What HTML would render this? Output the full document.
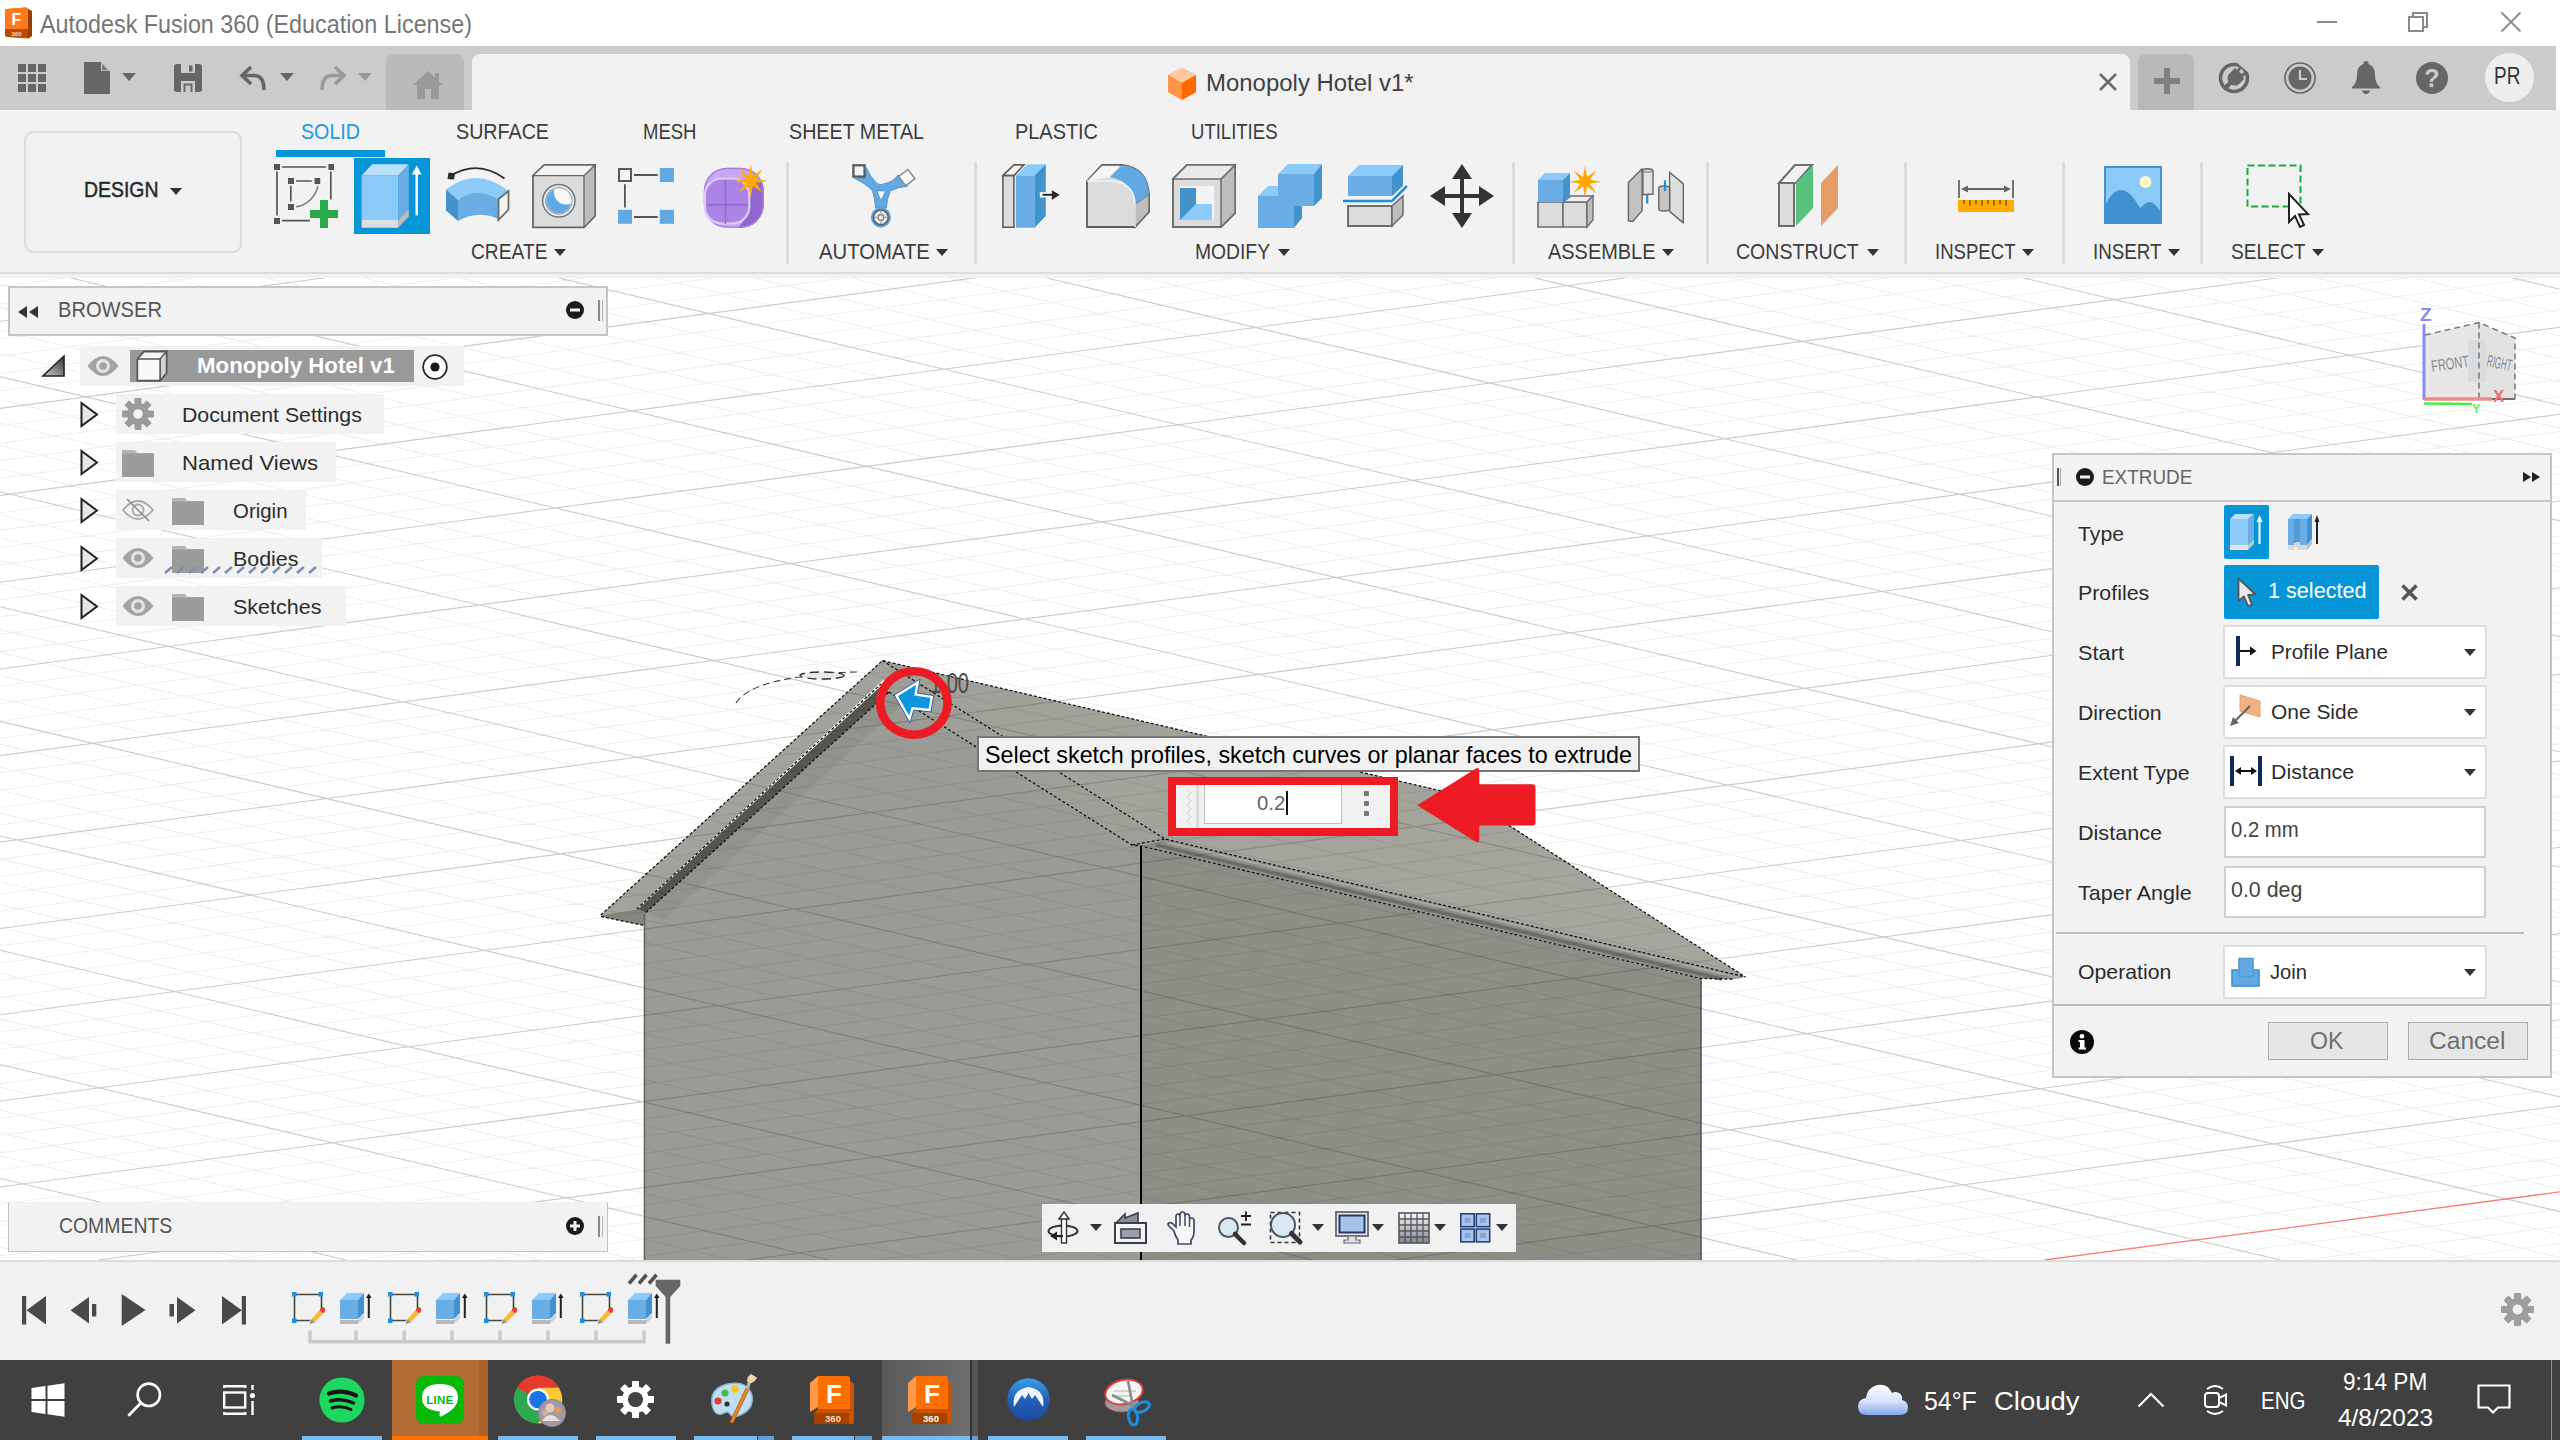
<!DOCTYPE html>
<html lang="en">
<head>
<meta charset="utf-8">
<title>Autodesk Fusion 360 (Education License)</title>
<style>
*{box-sizing:border-box;margin:0;padding:0}
html,body{width:2560px;height:1440px;overflow:hidden;background:#fff;font-family:"Liberation Sans",sans-serif;color:#333}
.abs{position:absolute}
.t{position:absolute;white-space:nowrap;line-height:1}
svg{position:absolute;overflow:visible}
#titlebar{left:0;top:0;width:2560px;height:46px;background:#fff}
#tabbar{left:0;top:46px;width:2556px;height:64px;background:#cbcbcb}
#ribbon{left:0;top:110px;width:2560px;height:168px;background:#f2f2f2}
#canvas{left:0;top:273px;width:2560px;height:987px;background:#fff;overflow:hidden}
#timeline{left:0;top:1260px;width:2560px;height:100px;background:#f1f1f1;border-top:2px solid #dcdcdc}
#taskbar{left:0;top:1360px;width:2560px;height:80px;background:#404040}
.rtab{font-size:21.5px;color:#3c3c3c;top:122px}
.rlab{font-size:21.5px;color:#3c3c3c;top:242px}
.sep{position:absolute;top:162px;width:3px;height:102px;background:#dcdcdc}
.dd{position:absolute;width:0;height:0;border-left:6px solid transparent;border-right:6px solid transparent;border-top:7px solid #333}
.brow{position:absolute;height:40px;background:#f2f2f2}
.btxt{font-size:20.5px;color:#2c2c2c;letter-spacing:0.2px}
.plab{font-size:20.5px;color:#2c2c2c}
.pdd{position:absolute;left:2223px;width:264px;height:54px;background:#fff;border:2px solid #dedede;border-radius:3px}
.pin{position:absolute;left:2224px;width:262px;height:52px;background:#fff;border:2px solid #cfcfcf}
.tbt{color:#fff;font-family:"Liberation Sans",sans-serif}
</style>
</head>
<body>
<!-- ================= TITLE BAR ================= -->
<div id="titlebar" class="abs">
  <svg style="left:4px;top:7px" width="30" height="32" viewBox="0 0 30 32">
    <path d="M3 2 L22 0.5 L28 4 L28 29 L24 31.5 L3 30 Q1 30 1 28 L1 4 Q1 2 3 2Z" fill="#b84a0c"/>
    <path d="M3 2 L22 0.5 Q24 0.5 24 3 L24 22 L1 22 L1 4 Q1 2 3 2Z" fill="#ff7a1a"/>
    <path d="M24 3 L28 4 L28 29 L24 31.5Z" fill="#9a3c08"/>
    <text x="12.5" y="17.5" font-size="16" font-weight="bold" fill="#fff" text-anchor="middle" font-family="Liberation Sans,sans-serif">F</text>
    <text x="12.5" y="29" font-size="6" font-weight="bold" fill="#ffd9b8" text-anchor="middle" font-family="Liberation Sans,sans-serif">360</text>
  </svg>
  <div class="t" style="left:40px;top:11.84px;font-size:25px;color:#767676;transform:scaleX(0.9335);transform-origin:0 0;">Autodesk Fusion 360 (Education License)</div>
  <!-- window controls -->
  <div class="abs" style="left:2317px;top:21px;width:20px;height:2px;background:#8a8a8a"></div>
  <div class="abs" style="left:2412px;top:12px;width:16px;height:16px;border:2px solid #8a8a8a"></div>
  <div class="abs" style="left:2408px;top:16px;width:16px;height:16px;border:2px solid #8a8a8a;background:#fff"></div>
  <svg style="left:2501px;top:12px" width="20" height="20" viewBox="0 0 20 20"><path d="M0.5 0.5 L19.5 19.5 M19.5 0.5 L0.5 19.5" stroke="#8c8c8c" stroke-width="1.8" fill="none"/></svg>
</div>

<!-- ================= TAB / QAT BAR ================= -->
<div id="tabbar" class="abs">
  <!-- home tab -->
  <div class="abs" style="left:386px;top:8px;width:78px;height:56px;background:#bababa;border-radius:7px 7px 0 0"></div>
  <!-- document tab -->
  <div class="abs" style="left:472px;top:8px;width:1658px;height:56px;background:#f1f1f1;border-radius:8px 8px 0 0"></div>
  <!-- plus tab -->
  <div class="abs" style="left:2138px;top:8px;width:56px;height:56px;background:#b9b9b9;border-radius:7px 7px 0 0"></div>
</div>

<!-- QAT icons -->
<svg style="left:18px;top:64px" width="28" height="28" viewBox="0 0 28 28" fill="#666">
 <rect x="0" y="0" width="8" height="8"/><rect x="10" y="0" width="8" height="8"/><rect x="20" y="0" width="8" height="8"/>
 <rect x="0" y="10" width="8" height="8"/><rect x="10" y="10" width="8" height="8"/><rect x="20" y="10" width="8" height="8"/>
 <rect x="0" y="20" width="8" height="8"/><rect x="10" y="20" width="8" height="8"/><rect x="20" y="20" width="8" height="8"/>
</svg>
<svg style="left:84px;top:62px" width="26" height="32" viewBox="0 0 26 32"><path d="M1 0 H17 L26 9 V31 Q26 32 25 32 H1 Q0 32 0 31 V1 Q0 0 1 0Z" fill="#666"/><path d="M17 0 L26 9 H17Z" fill="#cbcbcb"/><path d="M18 2 L24 8.2 H18Z" fill="#777"/></svg>
<div class="dd" style="left:122px;top:73px;border-left-width:7px;border-right-width:7px;border-top:8px solid #666"></div>
<svg style="left:174px;top:64px" width="28" height="28" viewBox="0 0 28 28"><path d="M3 0 H25 Q28 0 28 3 V25 Q28 28 25 28 H3 Q0 28 0 25 V3 Q0 0 3 0Z" fill="#666"/><rect x="7" y="0" width="14" height="9" fill="#cbcbcb"/><rect x="15" y="1.5" width="3.5" height="6" fill="#666"/><rect x="7" y="17" width="14" height="11" fill="#cbcbcb"/><rect x="9.5" y="19.5" width="9" height="8.5" fill="#666"/><rect x="11.5" y="21.5" width="5" height="6.5" fill="#cbcbcb"/></svg>
<svg style="left:240px;top:66px" width="26" height="24" viewBox="0 0 26 24"><path d="M11 1 L2 9.5 L11 18" fill="none" stroke="#666" stroke-width="3.6"/><path d="M3 9.5 H14 Q24 9.5 24 24" fill="none" stroke="#666" stroke-width="3.6"/></svg>
<div class="dd" style="left:280px;top:73px;border-left-width:7px;border-right-width:7px;border-top:8px solid #666"></div>
<svg style="left:320px;top:66px" width="26" height="24" viewBox="0 0 26 24"><path d="M15 1 L24 9.5 L15 18" fill="none" stroke="#999" stroke-width="3.6"/><path d="M23 9.5 H12 Q2 9.5 2 24" fill="none" stroke="#999" stroke-width="3.6"/></svg>
<div class="dd" style="left:358px;top:73px;border-left-width:7px;border-right-width:7px;border-top:8px solid #999"></div>
<svg style="left:413px;top:71px" width="30" height="28" viewBox="0 0 30 28"><path d="M15 0 L30 14 H26 V28 H18 V18 H12 V28 H4 V14 H0Z" fill="#999"/><rect x="22" y="2" width="4" height="8" fill="#999"/></svg>
<!-- doc tab title -->
<svg style="left:1167px;top:68px" width="30" height="32" viewBox="0 0 30 32"><path d="M15 0 L29 7 L29 24 L15 32 L1 24 L1 7Z" fill="#ff8c3a"/><path d="M15 0 L29 7 L15 15 L1 7Z" fill="#ffc9a0"/><path d="M15 15 L29 7 L29 24 L15 32Z" fill="#ff6a00"/><path d="M15 15 L1 7 L1 24 L15 32Z" fill="#ff9447"/></svg>
<div class="t" style="left:1206px;top:70.86px;font-size:24.5px;color:#404040;transform:scaleX(0.9776);transform-origin:0 0;">Monopoly Hotel v1*</div>
<svg style="left:2099px;top:73px" width="18" height="18" viewBox="0 0 18 18"><path d="M1 1 L17 17 M17 1 L1 17" stroke="#6a6a6a" stroke-width="2.6" fill="none"/></svg>
<div class="abs" style="left:2154px;top:78px;width:26px;height:6px;background:#808080"></div>
<div class="abs" style="left:2164px;top:68px;width:6px;height:26px;background:#808080"></div>
<!-- right icons -->
<svg style="left:2218px;top:62px" width="32" height="32" viewBox="0 0 32 32"><circle cx="16" cy="16" r="13.5" fill="none" stroke="#666" stroke-width="3.6"/><path d="M11 12 L17 6 L19 8 L21 5 L23 7 L21 10 L24 12 L26 10 L28 12 L25 15 L26 17 L20 23 Q15 25 11 21 Q8 16 11 12Z" fill="#666"/><path d="M4 25 L12 19 L14 22 L8 29Z" fill="#666"/><path d="M18 0 L32 0 L32 12Z" fill="#cbcbcb"/></svg>
<svg style="left:2284px;top:62px" width="32" height="32" viewBox="0 0 32 32"><circle cx="16" cy="16" r="15" fill="none" stroke="#666" stroke-width="1.6"/><circle cx="16" cy="16" r="11.5" fill="#666"/><path d="M16 8 V17 H23" stroke="#cbcbcb" stroke-width="2.2" fill="none"/></svg>
<svg style="left:2352px;top:61px" width="28" height="34" viewBox="0 0 28 34"><path d="M14 0 Q16.5 0 16.5 3 Q23 5 23 14 Q23 22 28 26 V27.5 H0 V26 Q5 22 5 14 Q5 5 11.5 3 Q11.5 0 14 0Z" fill="#666"/><path d="M10 29.5 H18 Q17 33 14 33 Q11 33 10 29.5Z" fill="#666"/></svg>
<svg style="left:2416px;top:62px" width="32" height="32" viewBox="0 0 32 32"><circle cx="16" cy="16" r="16" fill="#666"/><text x="16" y="24.5" font-size="25" font-weight="bold" fill="#cbcbcb" text-anchor="middle" font-family="Liberation Sans,sans-serif">?</text></svg>
<div class="abs" style="left:2485px;top:53px;width:49px;height:49px;border-radius:50%;background:#eeeeee"></div>
<div class="t" style="left:2494px;top:65.14px;font-size:23.7px;color:#333333;transform:scaleX(0.8023);transform-origin:0 0;">PR</div>


<!-- ================= RIBBON ================= -->
<div id="ribbon" class="abs"></div>
<!-- workspace button -->
<div class="abs" style="left:24px;top:131px;width:218px;height:122px;border:2.500px solid #dcdcdc;border-radius:9px;background:#f1f1f1"></div>
<div class="t" style="left:84px;top:178.95px;font-size:22.5px;color:#2a2a2a;transform:scaleX(0.8636);transform-origin:0 0;-webkit-text-stroke:0.5px #2a2a2a">DESIGN</div>
<div class="dd" style="left:170px;top:188px"></div>
<!-- tabs -->
<div class="t" style="left:301px;top:121.80px;font-size:21.5px;color:#1a9be0;transform:scaleX(0.9143);transform-origin:0 0;">SOLID</div>
<div class="abs" style="left:276px;top:150px;width:109px;height:7px;background:#0696d7"></div>
<div class="t" style="left:456px;top:121.80px;font-size:21.5px;color:#3c3c3c;transform:scaleX(0.9157);transform-origin:0 0;">SURFACE</div>
<div class="t" style="left:642.5px;top:121.80px;font-size:21.5px;color:#3c3c3c;transform:scaleX(0.8612);transform-origin:0 0;">MESH</div>
<div class="t" style="left:788.7px;top:121.80px;font-size:21.5px;color:#3c3c3c;transform:scaleX(0.9161);transform-origin:0 0;">SHEET METAL</div>
<div class="t" style="left:1014.5px;top:121.80px;font-size:21.5px;color:#3c3c3c;transform:scaleX(0.9261);transform-origin:0 0;">PLASTIC</div>
<div class="t" style="left:1191px;top:121.80px;font-size:21.5px;color:#3c3c3c;transform:scaleX(0.8619);transform-origin:0 0;">UTILITIES</div>
<!-- group labels -->
<div class="t" style="left:471px;top:240.88px;font-size:22px;color:#3c3c3c;transform:scaleX(0.8732);transform-origin:0 0;">CREATE</div><div class="dd" style="left:554px;top:249px"></div>
<div class="t" style="left:818.7px;top:240.88px;font-size:22px;color:#3c3c3c;transform:scaleX(0.9218);transform-origin:0 0;">AUTOMATE</div><div class="dd" style="left:936px;top:249px"></div>
<div class="t" style="left:1195px;top:240.88px;font-size:22px;color:#3c3c3c;transform:scaleX(0.8766);transform-origin:0 0;">MODIFY</div><div class="dd" style="left:1278px;top:249px"></div>
<div class="t" style="left:1547.5px;top:240.88px;font-size:22px;color:#3c3c3c;transform:scaleX(0.9063);transform-origin:0 0;">ASSEMBLE</div><div class="dd" style="left:1662px;top:249px"></div>
<div class="t" style="left:1736px;top:240.88px;font-size:22px;color:#3c3c3c;transform:scaleX(0.8884);transform-origin:0 0;">CONSTRUCT</div><div class="dd" style="left:1867px;top:249px"></div>
<div class="t" style="left:1934.5px;top:240.88px;font-size:22px;color:#3c3c3c;transform:scaleX(0.8442);transform-origin:0 0;">INSPECT</div><div class="dd" style="left:2022px;top:249px"></div>
<div class="t" style="left:2092.5px;top:240.88px;font-size:22px;color:#3c3c3c;transform:scaleX(0.8533);transform-origin:0 0;">INSERT</div><div class="dd" style="left:2168px;top:249px"></div>
<div class="t" style="left:2230.5px;top:240.88px;font-size:22px;color:#3c3c3c;transform:scaleX(0.8704);transform-origin:0 0;">SELECT</div><div class="dd" style="left:2312px;top:249px"></div>
<!-- separators -->
<div class="sep" style="left:786px"></div>
<div class="sep" style="left:974px"></div>
<div class="sep" style="left:1512px"></div>
<div class="sep" style="left:1706px"></div>
<div class="sep" style="left:1904px"></div>
<div class="sep" style="left:2062px"></div>
<div class="sep" style="left:2200px"></div>

<!-- 1 create sketch -->
<svg style="left:274px;top:164px" width="64" height="64" viewBox="0 0 64 64">
 <g stroke="#555" stroke-width="1.700" fill="none">
  <path d="M8 3 H52 M3 7.600 V51.400 M56.800 7.600 V35.500 M8 56.700 H35.800"/>
  <path d="M22 17 H37.800 M16.800 21.800 V37.500"/>
 </g>
 <path d="M43.800 22.200 A26 26 0 0 1 22 42.800" stroke="#777" stroke-width="1.500" fill="none"/>
 <g fill="#555">
  <rect x="0" y="0" width="6" height="6"/><rect x="54.400" y="0" width="5.600" height="6"/><rect x="0" y="54" width="6" height="6"/>
  <rect x="14" y="14" width="6" height="6"/><rect x="40.500" y="14" width="5.700" height="6"/><rect x="14" y="40" width="6" height="6"/>
 </g>
 <path d="M46 36 H54 V46 H64 V54 H54 V64 H46 V54 H36 V46 H46Z" fill="#2aa84a"/>
</svg>
<!-- 2 extrude (active) -->
<div class="abs" style="left:354px;top:158px;width:76px;height:76px;background:#0696d7"></div>
<svg style="left:354px;top:158px" width="76" height="76" viewBox="0 0 76 76">
 <path d="M7.600 17.600 L18.200 6.300 H54.800 L44.200 17.600Z" fill="#b9e0fd"/>
 <path d="M7.600 17.600 H44.200 V62 H7.600Z" fill="#8ccafa"/>
 <path d="M44.200 17.600 L54.800 6.300 V50.700 L44.200 62Z" fill="#6aade4"/>
 <path d="M7.600 62 H44.200 V69.800 H7.600Z" fill="#dedede"/>
 <path d="M44.200 62 L54.800 50.700 V58.500 L44.200 69.800Z" fill="#bcbcbc"/>
 <path d="M62.700 57.400 V15" stroke="#fff" stroke-width="2.400" fill="none"/>
 <path d="M57.800 16.500 L62.700 7.500 L67.600 16.500Z" fill="#fff"/>
</svg>
<!-- 3 revolve -->
<svg style="left:446px;top:164px" width="66" height="64" viewBox="0 0 66 64">
 <path d="M4 12 Q32 -5 58.500 14.500" stroke="#2a2a2a" stroke-width="1.800" fill="none"/>
 <path d="M1.500 15 L2.500 8.500 L9 9.500 L8 15.500Z" fill="#2a2a2a"/>
 <path d="M0 25.500 Q30 2 62 26.500 L52 35 Q30 22 12 36Z" fill="#8ccafa"/>
 <path d="M12 36 Q30 22 52 35 V54.500 Q32 46 12 57Z" fill="#6aade4"/>
 <path d="M0 25.500 L12 36 V57 L0 46.500Z" fill="#4292cc"/>
 <path d="M52.500 35 L62.500 27 V45.500 L52.500 56Z" fill="#f4f4f4" stroke="#6a6a6a" stroke-width="1.800"/>
</svg>
<!-- 4 hole -->
<svg style="left:532px;top:164px" width="64" height="64" viewBox="0 0 64 64">
 <defs><clipPath id="hc"><circle cx="26.800" cy="36.800" r="12.600"/></clipPath></defs>
 <path d="M1 11.600 L12.300 1 H63 V52 L52 63.400 H1Z" fill="#dcdcdc" stroke="#666" stroke-width="1.800"/>
 <path d="M52 11.600 L63 1 V52 L52 63.400Z" fill="#bdbdbd" stroke="#666" stroke-width="1.300"/>
 <path d="M1 11.600 L12.300 1 H63 L52 11.600Z" fill="#f4f4f4" stroke="#666" stroke-width="1.300"/>
 <circle cx="26.800" cy="36.800" r="16.200" fill="#ececec" stroke="#777" stroke-width="1.500"/>
 <circle cx="26.800" cy="36.800" r="13.400" fill="#f8f8f8" stroke="#999" stroke-width="1"/>
 <circle cx="26.800" cy="36.800" r="12.600" fill="#62a9e4"/>
 <circle cx="34" cy="28.500" r="12" fill="#f8f8f8" clip-path="url(#hc)"/>
</svg>
<!-- 5 pattern -->
<svg style="left:618px;top:168px" width="58" height="58" viewBox="0 0 58 58">
 <path d="M16 7 H39.800 M6.900 16.200 V39.500 M16 49 H39.800" stroke="#555" stroke-width="1.800" fill="none"/>
 <rect x="1" y="1" width="12" height="12" fill="#f4f4f4" stroke="#5a5a5a" stroke-width="2"/>
 <rect x="41.800" y="0" width="14.200" height="14" fill="#62a9e4"/>
 <rect x="0" y="41.800" width="14" height="14" fill="#62a9e4"/>
 <rect x="41.800" y="41.800" width="14.200" height="14" fill="#62a9e4"/>
</svg>
<!-- 6 form -->
<svg style="left:703px;top:162px" width="66" height="68" viewBox="0 0 66 68">
 <defs><clipPath id="fc"><rect x="0.800" y="5.800" width="60" height="60" rx="23"/></clipPath></defs>
 <rect x="0.800" y="5.800" width="60" height="60" rx="23" fill="#c9a6f7"/>
 <path d="M44 20 H66 V68 H30 Q50 60 44 20Z" fill="#8f67cf" clip-path="url(#fc)"/>
 <rect x="1.500" y="6.500" width="58.600" height="58.600" rx="22.500" fill="none" stroke="#a57fe0" stroke-width="1.400"/>
 <rect x="1.800" y="16.500" width="44.500" height="45" rx="17" fill="#ab84e6" stroke="#ddcdf8" stroke-width="2.200"/>
 <path d="M4.600 42.800 H45 M22.500 18 V62" stroke="#8f67cf" stroke-width="1.500" fill="none"/>
 <path d="M47.8 2.3 L49.9 13.7 L59.5 7.2 L53.0 16.8 L64.4 18.9 L53.0 21.0 L59.5 30.6 L49.9 24.1 L47.8 35.5 L45.7 24.1 L36.1 30.6 L42.6 21.0 L31.2 18.9 L42.6 16.8 L36.1 7.2 L45.7 13.7Z" fill="#ffa800"/>
</svg>
<!-- 7 automate -->
<svg style="left:851px;top:163px" width="66" height="66" viewBox="0 0 66 66">
 <path d="M3.400 15.200 L14.600 14.600 L15.300 4.600 Q19 14 25.900 20.600 Q30 23 34 20.500 Q42 19 47.200 11.900 L56.500 23.200 Q47 24 39.200 27.900 Q36 36 35.200 45.100 L24.600 45.100 Q24 35 21.300 27.200 Q14 20 3.400 15.200Z" fill="#62a9e4" stroke="#4f95cf" stroke-width="1"/>
 <path d="M25.900 27.900 L34.600 27.900 L29.900 37.800Z" fill="#f2f2f2" stroke="#4f95cf" stroke-width="0.800"/>
 <circle cx="29.900" cy="54.400" r="10" fill="#5b9fd6"/>
 <circle cx="29.900" cy="54.400" r="7.300" fill="#ececec" stroke="#555" stroke-width="1.400"/>
 <circle cx="29.900" cy="54.400" r="2.800" fill="none" stroke="#777" stroke-width="1.200"/>
 <path d="M29.900 47.500 V50.500 M29.900 58.300 V61.300 M23 54.400 H26 M33.800 54.400 H36.800" stroke="#999" stroke-width="1.200"/>
 <rect x="2.400" y="2.300" width="11.200" height="11.300" fill="#f2f2f2" stroke="#5a5a5a" stroke-width="2.300"/>
 <rect x="50" y="8.800" width="11.600" height="11.600" fill="#fbfbfb" stroke="#8a8a8a" stroke-width="1.500" transform="rotate(-38 55.800 14.600)"/>
</svg>
<!-- 8 press pull -->
<svg style="left:1002px;top:164px" width="60" height="64" viewBox="0 0 60 64">
 <path d="M0.900 11.600 L11.900 0.900 H21.900 L11.900 11.600Z" fill="#f4f4f4" stroke="#5e5e5e" stroke-width="1.600"/>
 <path d="M0.900 11.600 H11.900 V63.200 H0.900Z" fill="#dcdcdc" stroke="#5e5e5e" stroke-width="1.600"/>
 <path d="M13.900 11.600 L25.200 0.300 H43.800 L32.500 11.600Z" fill="#8ccafa"/>
 <path d="M13.900 11.600 H32.500 V63.800 H13.900Z" fill="#6aade4"/>
 <path d="M32.500 11.600 L43.800 0.300 V52.100 L32.500 63.800Z" fill="#4292cc"/>
 <rect x="37.800" y="28.200" width="12.600" height="5.300" fill="#f6f6f6"/>
 <path d="M40.500 30.800 H52" stroke="#2a2a2a" stroke-width="2"/>
 <path d="M49.800 26.200 L57.700 30.800 L49.800 35.900Z" fill="#2a2a2a"/>
</svg>
<!-- 9 fillet -->
<svg style="left:1086px;top:164px" width="64" height="64" viewBox="0 0 64 64">
 <path d="M1 17 L16 1 H36 Q62 4 63 32 V48 L49 63 H1Z" fill="#dcdcdc" stroke="#5e5e5e" stroke-width="1.800"/><path d="M1.800 16.500 L16.200 1.800 H34 L23 13.500Z" fill="#f4f4f4"/>
 <path d="M49 40 L63 30 V48 L49 63Z" fill="#bdbdbd" stroke="#6e6e6e" stroke-width="1.5"/>
 <path d="M24 13 L36 1 Q62 4 63 30 L49 40 Q48 18 24 13Z" fill="#62a9e4"/>
 <path d="M1 17 H24 Q48 18 49 40 V63" fill="none" stroke="#f4f4f4" stroke-width="1.5"/>
</svg>
<!-- 10 shell -->
<svg style="left:1172px;top:164px" width="64" height="64" viewBox="0 0 64 64">
 <path d="M1 15 L15 1 H63 V49 L49 63 H1Z" fill="#dcdcdc" stroke="#6e6e6e" stroke-width="2"/>
 <path d="M49 15 L63 1 V49 L49 63Z" fill="#bdbdbd" stroke="#6e6e6e" stroke-width="1.5"/>
 <path d="M1 15 L15 1 H63 L49 15Z" fill="#e9e9e9" stroke="#6e6e6e" stroke-width="1.5"/>
 <rect x="8" y="22" width="34" height="34" fill="#f4f4f4"/>
 <path d="M8 24 H24 V40 H40 V56 H8Z" fill="#8ccafa"/>
 <path d="M8 24 H24 V40 L8 56Z" fill="#4292cc"/>
</svg>
<!-- 11 combine -->
<svg style="left:1258px;top:164px" width="64" height="64" viewBox="0 0 64 64">
 <path d="M20 10 L30 0 H64 L56 10Z" fill="#8ccafa"/>
 <path d="M0 32 L10 22 H22 V32Z" fill="#8ccafa"/>
 <path d="M20 10 H56 V42 H36 V64 H0 V32 H20Z" fill="#6aade4"/>
 <path d="M56 10 L64 0 V34 L56 42Z" fill="#4292cc"/>
 <path d="M36 42 H44 L44 54 L36 64Z" fill="#4292cc"/>
</svg>
<!-- 12 split body -->
<svg style="left:1343px;top:164px" width="66" height="64" viewBox="0 0 66 64">
 <path d="M5 12 L16 1 H60 L49 12Z" fill="#8ccafa"/>
 <path d="M5 12 H49 V32 H5Z" fill="#6aade4"/>
 <path d="M49 12 L60 1 V22 L49 32Z" fill="#4292cc"/>
 <path d="M5 42 H49 V62 H5Z" fill="#dcdcdc" stroke="#6e6e6e" stroke-width="2"/>
 <path d="M49 42 L60 32 V51 L49 62Z" fill="#bdbdbd" stroke="#6e6e6e" stroke-width="1.5"/>
 <path d="M0 37 H49 L64 22" stroke="#1b8fe0" stroke-width="2.500" fill="none"/>
</svg>
<!-- 13 move -->
<svg style="left:1430px;top:164px" width="64" height="64" viewBox="0 0 64 64">
 <path d="M32 8 V56 M8 32 H56" stroke="#333" stroke-width="4" fill="none"/>
 <path d="M32 0 L42 15 H22Z M32 64 L42 49 H22Z M0 32 L15 22 V42Z M64 32 L49 22 V42Z" fill="#333"/>
</svg>
<!-- 14 new component -->
<svg style="left:1537px;top:164px" width="66" height="64" viewBox="0 0 66 64">
 <path d="M1 38 H26 V63 H1Z" fill="#dcdcdc" stroke="#6e6e6e" stroke-width="1.6"/>
 <path d="M26 38 H50 V63 H26Z" fill="#dcdcdc" stroke="#6e6e6e" stroke-width="1.6"/>
 <path d="M26 38 L34 32 H56 L50 38Z" fill="#efefef" stroke="#6e6e6e" stroke-width="1.4"/>
 <path d="M50 38 L56 32 V56 L50 63Z" fill="#bdbdbd" stroke="#6e6e6e" stroke-width="1.4"/>
 <path d="M1 16 L8 9 H33 L26 16Z" fill="#8ccafa"/>
 <path d="M1 16 H26 V38 H1Z" fill="#6aade4"/>
 <path d="M26 16 L33 9 V32 L26 38Z" fill="#4292cc"/>
 <path d="M48.0 1.7 L50.0 12.9 L59.3 6.4 L52.8 15.7 L64.0 17.7 L52.8 19.7 L59.3 29.0 L50.0 22.5 L48.0 33.7 L46.0 22.5 L36.7 29.0 L43.2 19.7 L32.0 17.7 L43.2 15.7 L36.7 6.4 L46.0 12.9Z" fill="#ffa800"/>
</svg>
<!-- 15 joint -->
<svg style="left:1627px;top:168px" width="58" height="60" viewBox="0 0 58 60">
 <path d="M1.400 14.500 L15.100 0.700 V42.600 L5.700 53.500 L1.400 52.700Z" fill="#c2c2c2" stroke="#666" stroke-width="1.400" stroke-linejoin="round"/>
 <path d="M15.100 3 Q15.100 0.700 20.500 0.700 Q26 0.700 26 3 V26 L15.900 26.700 V3Z" fill="#e2e2e2" stroke="#666" stroke-width="1.400"/>
 <ellipse cx="20.500" cy="2.800" rx="4.600" ry="1.600" fill="#cfcfcf" stroke="#777" stroke-width="0.900"/>
 <path d="M20.200 27 V35.600" stroke="#1b8fe0" stroke-width="2.200"/>
 <path d="M42.600 4.300 L56.300 15.900 V54.900 L42.600 43.400Z" fill="#dedede" stroke="#666" stroke-width="1.400" stroke-linejoin="round"/>
 <path d="M31.800 20 Q31.800 18 37 18 Q42.600 18 42.600 20 V41 Q42.600 43 37 43 Q31.800 43 31.800 41Z" fill="#c6c6c6" stroke="#666" stroke-width="1.400"/>
 <path d="M38 12.300 V23.100" stroke="#1b8fe0" stroke-width="2.200"/>
</svg>
<!-- 16 construct -->
<svg style="left:1777px;top:164px" width="62" height="64" viewBox="0 0 62 64">
 <path d="M2 19 L18 1 H35 L19 19Z" fill="#f1f1f1" stroke="#6e6e6e" stroke-width="2"/>
 <path d="M2 19 H17 V62 H2Z" fill="#dcdcdc" stroke="#6e6e6e" stroke-width="2"/>
 <path d="M19 19 L36 1 V44 L19 62Z" fill="#57c27c"/>
 <path d="M44 19 L61 1 V44 L44 62Z" fill="#e59c66"/>
</svg>
<!-- 17 inspect -->
<svg style="left:1958px;top:180px" width="56" height="32" viewBox="0 0 56 32">
 <path d="M1 0 V18 M55 0 V18 M5 9 H51" stroke="#666" stroke-width="1.800" fill="none"/>
 <path d="M3 9 L10 5.500 V12.500Z M53 9 L46 5.500 V12.500Z" fill="#666"/>
 <rect x="0" y="20" width="56" height="12" fill="#ffab00"/>
 <path d="M6 20 V24 M12 20 V25.500 M18 20 V24 M24 20 V25.500 M30 20 V24 M36 20 V25.500 M42 20 V24 M48 20 V25.500" stroke="#7a5a00" stroke-width="1.500"/>
</svg>
<!-- 18 insert -->
<svg style="left:2104px;top:166px" width="58" height="58" viewBox="0 0 58 58">
 <rect x="1" y="1" width="56" height="56" fill="#8ccafa" stroke="#4292cc" stroke-width="2"/>
 <circle cx="41.500" cy="16" r="6" fill="#fdf8c6"/>
 <path d="M1 57 V40 Q8 24 17 24 Q26 24 36 42 Q42 36 46 36 Q50 36 57 46 V57Z" fill="#3f92cd"/>
</svg>
<!-- 19 select -->
<svg style="left:2246px;top:164px" width="64" height="66" viewBox="0 0 64 66">
 <rect x="1.500" y="1.500" width="53" height="41" fill="none" stroke="#17ab3c" stroke-width="2" stroke-dasharray="7 3.500"/>
 <path d="M43 30 V58 L49 52 L54 63 L58 61 L53 50.500 L62 50Z" fill="#fff" stroke="#222" stroke-width="2"/>
</svg>


<!-- ================= CANVAS ================= -->
<div id="canvas" class="abs">
<svg style="left:0;top:0" width="2560" height="987" viewBox="0 0 2560 987"><path d="M0.0 973.7L56.3 987.0M0.0 951.0L152.9 987.0M0.0 928.2L249.5 987.0M0.0 882.7L442.7 987.0M0.0 859.9L539.3 987.0M0.0 837.1L636.0 987.0M0.0 814.3L732.6 987.0M0.0 768.7L926.0 987.0M0.0 745.9L1022.6 987.0M0.0 723.0L1119.3 987.0M0.0 700.2L1216.0 987.0M0.0 654.5L1409.5 987.0M0.0 631.6L1506.2 987.0M0.0 608.7L1603.0 987.0M0.0 585.9L1699.7 987.0M0.0 540.1L1893.3 987.0M0.0 517.2L1990.0 987.0M0.0 494.3L2086.8 987.0M0.0 471.4L2183.7 987.0M0.0 425.5L2377.3 987.0M0.0 402.5L2474.2 987.0M0.0 379.6L2560.0 984.4M0.0 356.6L2560.0 961.5M0.0 310.7L2560.0 915.7M0.0 287.7L2560.0 892.8M0.0 264.7L2560.0 869.9M0.0 241.7L2560.0 847.0M0.0 195.7L2560.0 801.1M0.0 172.7L2560.0 778.1M0.0 149.7L2560.0 755.2M0.0 126.6L2560.0 732.2M0.0 80.5L2560.0 686.2M0.0 57.5L2560.0 663.2M0.0 34.4L2560.0 640.3M0.0 11.3L2560.0 617.2M147.3 0.0L2560.0 571.2M244.8 0.0L2560.0 548.2M342.4 0.0L2560.0 525.1M440.0 0.0L2560.0 502.1M635.2 0.0L2560.0 456.0M732.8 0.0L2560.0 432.9M830.4 0.0L2560.0 409.8M928.0 0.0L2560.0 386.7M1123.3 0.0L2560.0 340.5M1221.0 0.0L2560.0 317.4M1318.6 0.0L2560.0 294.3M1416.3 0.0L2560.0 271.2M1611.7 0.0L2560.0 224.9M1709.4 0.0L2560.0 201.7M1807.2 0.0L2560.0 178.6M1904.9 0.0L2560.0 155.4M2100.4 0.0L2560.0 109.1M2198.2 0.0L2560.0 85.9M2296.0 0.0L2560.0 62.7M2393.8 0.0L2560.0 39.5M0.0 13.5L100.4 -0.0M0.0 30.9L230.4 0.0M0.0 65.7L490.6 0.0M0.0 83.2L620.7 0.0M0.0 100.6L750.8 0.0M0.0 118.0L880.9 0.0M0.0 152.8L1141.3 0.0M0.0 170.2L1271.5 0.0M0.0 187.6L1401.7 0.0M0.0 205.0L1531.9 0.0M0.0 239.8L1792.5 0.0M0.0 257.1L1922.8 0.0M0.0 274.5L2053.1 0.0M0.0 291.9L2183.4 0.0M0.0 326.6L2444.1 0.0M0.0 343.9L2560.0 1.9M0.0 361.3L2560.0 19.4M0.0 378.6L2560.0 36.8M0.0 413.3L2560.0 71.6M0.0 430.6L2560.0 89.0M0.0 448.0L2560.0 106.4M0.0 465.3L2560.0 123.8M-0.0 499.9L2560.0 158.5M0.0 517.2L2560.0 175.9M0.0 534.5L2560.0 193.3M0.0 551.8L2560.0 210.7M0.0 586.4L2560.0 245.4M0.0 603.7L2560.0 262.7M0.0 621.0L2560.0 280.1M0.0 638.2L2560.0 297.4M0.0 672.8L2560.0 332.1M0.0 690.0L2560.0 349.4M0.0 707.3L2560.0 366.8M0.0 724.5L2560.0 384.1M0.0 759.0L2560.0 418.7M0.0 776.3L2560.0 436.0M0.0 793.5L2560.0 453.3M0.0 810.7L2560.0 470.6M0.0 845.2L2560.0 505.2M0.0 862.4L2560.0 522.5M0.0 879.6L2560.0 539.8M0.0 896.8L2560.0 557.1M0.0 931.2L2560.0 591.6M0.0 948.4L2560.0 608.9M0.0 965.6L2560.0 626.1M0.0 982.8L2560.0 643.4M227.5 987.0L2560.0 677.9M357.2 987.0L2560.0 695.1M486.8 987.0L2560.0 712.4M616.5 987.0L2560.0 729.6M876.0 987.0L2560.0 764.1M1005.7 987.0L2560.0 781.3M1135.5 987.0L2560.0 798.5M1265.3 987.0L2560.0 815.7M1524.9 987.0L2560.0 850.1M1654.7 987.0L2560.0 867.3M1784.6 987.0L2560.0 884.5M1914.5 987.0L2560.0 901.7M2174.3 987.0L2560.0 936.0M2304.3 987.0L2560.0 953.2M2434.2 987.0L2560.0 970.4" stroke="#efefef" stroke-width="1.1" fill="none"/><path d="M0.0 905.5L346.1 987.0M0.0 791.5L829.3 987.0M0.0 677.3L1312.7 987.0M0.0 563.0L1796.5 987.0M0.0 448.4L2280.5 987.0M0.0 333.7L2560.0 938.6M0.0 218.7L2560.0 824.0M0.0 103.6L2560.0 709.2M49.8 0.0L2560.0 594.2M537.6 0.0L2560.0 479.0M1025.7 0.0L2560.0 363.6M1514.0 0.0L2560.0 248.0M2002.7 0.0L2560.0 132.2M2491.6 0.0L2560.0 16.2M0.0 48.3L360.5 0.0M0.0 135.4L1011.1 -0.0M0.0 222.4L1662.2 0.0M0.0 309.2L2313.8 0.0M-0.0 396.0L2560.0 54.2M0.0 482.6L2560.0 141.2M0.0 569.1L2560.0 228.0M0.0 655.5L2560.0 314.8M0.0 741.8L2560.0 401.4M0.0 828.0L2560.0 487.9M0.0 914.0L2560.0 574.3M97.9 987.0L2560.0 660.6M746.2 987.0L2560.0 746.8M1395.1 987.0L2560.0 832.9" stroke="#cbcbcb" stroke-width="1.1" fill="none"/><path d="M2044.4 987.0L2560.0 918.9" stroke="#f47c7c" stroke-width="1.3" fill="none"/></svg>
<svg style="left:0;top:0" width="2560" height="987" viewBox="0 273 2560 987">
 <defs>
  <clipPath id="hclip"><path d="M644 1260 V914 L600.800 915 L882.500 660.600 L1463 796 L1745.400 976.900 L1733.500 979.200 L1701 979 V1260Z"/></clipPath>
  <linearGradient id="gwl" x1="0" y1="0" x2="1" y2="0"><stop offset="0" stop-color="#989892"/><stop offset="1" stop-color="#9b9a95"/></linearGradient>
  <linearGradient id="gwr" x1="0" y1="0" x2="0" y2="1"><stop offset="0" stop-color="#878982"/><stop offset="1" stop-color="#8d8f88"/></linearGradient>
  <linearGradient id="groof" x1="0" y1="0" x2="0.3" y2="1"><stop offset="0" stop-color="#9c9b94"/><stop offset="1" stop-color="#a3a29a"/></linearGradient>
 </defs>
 <!-- dashed arc + dimension text behind house -->
 <path d="M736 703 Q748 684 800 677 Q830 672 858 672" stroke="#444" stroke-width="1.2" fill="none" stroke-dasharray="7 4"/>
 <ellipse cx="822" cy="675.500" rx="22" ry="3.500" fill="#e8e8e8" stroke="#333" stroke-width="1.500" stroke-dasharray="9 5"/>
 <!-- walls -->
 <g fill-opacity="0.93">
 <path d="M644 1260 V914 L889 692 L1132 845 L1141 846 V1260Z" fill="#93938d"/>
 <path d="M1141 846 L1701 979 V1260 H1141Z" fill="#82867d"/>
 </g>
 <!-- wall shading near rake -->
 <path d="M645.800 912.500 L889 692 L905 702 L664 920Z" fill="#8c8c86" fill-opacity="0.500"/>
 <!-- roof top surface -->
 <path d="M882.500 660.600 L1463 796 L1745.400 976.900 L1165 839Z" fill="url(#groof)" fill-opacity="0.960"/>
 <!-- right rake strip of front gable -->
 <path d="M882.500 660.600 L1165 839 L1141 846 L1132 845 L889 692 L884 682Z" fill="#9f9e97"/>
 <!-- left rake fascia -->
 <path d="M600.800 915 L882.500 660.600 L893 671 L636.700 909.200Z" fill="#a3a39c"/>
 <!-- eave end -->
 <path d="M600.800 915 L636.700 909.200 L645.800 912.500 L644 925.400 L602.500 917Z" fill="#84847e"/>
 <!-- dark band -->
 <path d="M637.500 909.500 L645.800 912.500 L889 692 L882 685Z" fill="#55554f"/>
 <!-- right eave band -->
 <path d="M1165 839 L1745.400 976.900 L1733.500 979.200 L1700.300 978.400 L1141 846Z" fill="#8e8f88"/>
 <path d="M1156 845 L1722 979" stroke="#6c6d67" stroke-width="3.500" fill="none"/>
 <path d="M1166 842 L1740 978" stroke="#a9a9a1" stroke-width="2" fill="none"/>
 <g clip-path="url(#hclip)"><path d="M0.0 1110.1L636.0 1260.0M0.0 1087.3L732.6 1260.0M0.0 1041.7L926.0 1260.0M0.0 1018.9L1022.6 1260.0M0.0 996.0L1119.3 1260.0M0.0 973.2L1216.0 1260.0M0.0 927.5L1409.5 1260.0M0.0 904.6L1506.2 1260.0M0.0 881.7L1603.0 1260.0M0.0 858.9L1699.7 1260.0M0.0 813.1L1893.3 1260.0M0.0 790.2L1990.0 1260.0M0.0 767.3L2086.8 1260.0M0.0 744.4L2183.7 1260.0M0.0 698.5L2377.3 1260.0M0.0 675.5L2474.2 1260.0M0.0 652.6L2560.0 1257.4M0.0 629.6L2560.0 1234.5M0.0 583.7L2560.0 1188.7M0.0 560.7L2560.0 1165.8M0.0 537.7L2560.0 1142.9M0.0 514.7L2560.0 1120.0M0.0 468.7L2560.0 1074.1M0.0 445.7L2560.0 1051.1M0.0 422.7L2560.0 1028.2M0.0 399.6L2560.0 1005.2M0.0 353.5L2560.0 959.2M0.0 330.5L2560.0 936.2M0.0 307.4L2560.0 913.3M0.0 284.3L2560.0 890.2M147.3 273.0L2560.0 844.2M244.8 273.0L2560.0 821.2M342.4 273.0L2560.0 798.1M440.0 273.0L2560.0 775.1M635.2 273.0L2560.0 729.0M732.8 273.0L2560.0 705.9M830.4 273.0L2560.0 682.8M928.0 273.0L2560.0 659.7M0.0 651.6L2560.0 309.8M0.0 686.3L2560.0 344.6M0.0 703.6L2560.0 362.0M0.0 721.0L2560.0 379.4M0.0 738.3L2560.0 396.8M-0.0 772.9L2560.0 431.5M0.0 790.2L2560.0 448.9M0.0 807.5L2560.0 466.3M0.0 824.8L2560.0 483.7M0.0 859.4L2560.0 518.4M0.0 876.7L2560.0 535.7M0.0 894.0L2560.0 553.1M0.0 911.2L2560.0 570.4M0.0 945.8L2560.0 605.1M0.0 963.0L2560.0 622.4M0.0 980.3L2560.0 639.8M0.0 997.5L2560.0 657.1M0.0 1032.0L2560.0 691.7M0.0 1049.3L2560.0 709.0M0.0 1066.5L2560.0 726.3M0.0 1083.7L2560.0 743.6M0.0 1118.2L2560.0 778.2M0.0 1135.4L2560.0 795.5M0.0 1152.6L2560.0 812.8M0.0 1169.8L2560.0 830.1M0.0 1204.2L2560.0 864.6M0.0 1221.4L2560.0 881.9M0.0 1238.6L2560.0 899.1M0.0 1255.8L2560.0 916.4M227.5 1260.0L2560.0 950.9M357.2 1260.0L2560.0 968.1M486.8 1260.0L2560.0 985.4M616.5 1260.0L2560.0 1002.6M876.0 1260.0L2560.0 1037.1M1005.7 1260.0L2560.0 1054.3M1135.5 1260.0L2560.0 1071.5M1265.3 1260.0L2560.0 1088.7M1524.9 1260.0L2560.0 1123.1M1654.7 1260.0L2560.0 1140.3" stroke="#000" stroke-opacity="0.07" stroke-width="1.1" fill="none"/><path d="M0.0 1064.5L829.3 1260.0M0.0 950.3L1312.7 1260.0M0.0 836.0L1796.5 1260.0M0.0 721.4L2280.5 1260.0M0.0 606.7L2560.0 1211.6M0.0 491.7L2560.0 1097.0M0.0 376.6L2560.0 982.2M49.8 273.0L2560.0 867.2M537.6 273.0L2560.0 752.0M-0.0 669.0L2560.0 327.2M0.0 755.6L2560.0 414.2M0.0 842.1L2560.0 501.0M0.0 928.5L2560.0 587.8M0.0 1014.8L2560.0 674.4M0.0 1101.0L2560.0 760.9M0.0 1187.0L2560.0 847.3M97.9 1260.0L2560.0 933.6M746.2 1260.0L2560.0 1019.8M1395.1 1260.0L2560.0 1105.9" stroke="#000" stroke-opacity="0.15" stroke-width="1.2" fill="none"/></g>
 <!-- edge lines -->
 <g stroke="#0a0a0a" stroke-width="1.200" fill="none" stroke-dasharray="3 2">
  <path d="M600.800 915 L882.500 660.600 L1463 796 L1745.400 976.900"/>
  <path d="M882.500 660.600 L1165 839 L1745.400 976.900"/>
  <path d="M889 692 L1132 845 L1141 846 L1700.300 978.400 L1733.500 979.200"/>
  <path d="M636.700 909.200 L881 684"/>
  <path d="M645.800 912.500 L889 692"/>
  <path d="M601 916.500 L644 925.400"/>
  <path d="M1132 845 L1165 839"/>
 </g>
 <path d="M1141 846 V1260" stroke="#000" stroke-width="2" fill="none"/>
 <path d="M644.500 914 V1260" stroke="#666" stroke-width="1.600" fill="none"/>
 <path d="M1701 979 V1260" stroke="#555" stroke-width="1.600" fill="none"/>
</svg>

</div>
<div class="abs" style="left:0;top:272px;width:2560px;height:2px;background:#dcdcdc"></div>
<div class="abs" style="left:0;top:274px;width:2560px;height:4px;background:#f2f2f2"></div>
<!-- ===== BROWSER PANEL ===== -->
<div class="abs" style="left:8px;top:286px;width:600px;height:50px;background:#f2f2f2;border:2px solid #c6c6c6"></div>
<svg style="left:18px;top:306px" width="20" height="12" viewBox="0 0 20 14" preserveAspectRatio="none"><path d="M9 0 V14 L0 7Z M20 0 V14 L11 7Z" fill="#333"/></svg>
<div class="t" style="left:58.2px;top:299.02px;font-size:22.3px;color:#555555;transform:scaleX(0.9026);transform-origin:0 0;">BROWSER</div>
<svg style="left:566px;top:301px" width="18" height="18" viewBox="0 0 18 18"><circle cx="9" cy="9" r="9" fill="#1a1a1a"/><rect x="4" y="7.500" width="10" height="3" fill="#f2f2f2"/></svg>
<div class="abs" style="left:598px;top:300px;width:2px;height:21px;background:#8a8a8a"></div>
<div class="abs" style="left:602px;top:300px;width:1px;height:21px;background:#b5b5b5"></div>

<!-- row 1 -->
<div class="brow" style="left:80px;top:346px;width:384px"></div>
<svg style="left:42px;top:355px" width="23" height="22" viewBox="0 0 23 22"><defs><linearGradient id="tg" x1="0" y1="1" x2="1" y2="0"><stop offset="0" stop-color="#cfcfcf"/><stop offset="1" stop-color="#333"/></linearGradient></defs><path d="M22 1 V21 H1Z" fill="url(#tg)" stroke="#222" stroke-width="1.600"/></svg>
<svg id="eye1" style="left:87px;top:355px" width="32" height="22" viewBox="0 0 32 22"><path d="M0.500 11 Q16 -9 31.500 11 Q16 31 0.500 11Z" fill="#a3a3a3"/><circle cx="16" cy="11" r="7" fill="#e4e4e4"/><circle cx="16" cy="11" r="3.800" fill="#a3a3a3"/></svg>
<div class="abs" style="left:130px;top:350px;width:284px;height:32px;background:#999999"></div>
<svg style="left:136px;top:350px" width="32" height="32" viewBox="0 0 32 32"><path d="M1.500 9 L8 1.500 H30.500 V23 L24 30.500 H1.500Z" fill="#f4f4f4" stroke="#555" stroke-width="1.800"/><path d="M24 9 L30.500 1.500 V23 L24 30.500Z" fill="#d2d2d2" stroke="#555" stroke-width="1.400"/><path d="M1.500 9 H24 V30.500 H1.500Z" fill="#fafafa" stroke="#555" stroke-width="1.400" rx="2"/></svg>
<div class="t" style="left:196.6px;top:355.80px;font-size:21.5px;color:#ffffff;font-weight:700;transform:scaleX(1.0349);transform-origin:0 0;">Monopoly Hotel v1</div>
<svg style="left:422px;top:354px" width="26" height="26" viewBox="0 0 26 26"><circle cx="13" cy="13" r="11.800" fill="#fff" stroke="#2a2a2a" stroke-width="1.800"/><circle cx="13" cy="13" r="4.600" fill="#1a1a1a"/></svg>

<!-- row 2 document settings -->
<div class="brow" style="left:116px;top:394px;width:268px"></div>
<svg class="tri" style="left:80px;top:401px" width="19" height="27" viewBox="0 0 19 27"><path d="M1.500 2 L17 13.500 L1.500 25Z" fill="#e6e6e6" stroke="#222" stroke-width="2"/></svg>
<svg style="left:122px;top:398px" width="32" height="32" viewBox="0 0 32 32"><g fill="#9b9b9b"><circle cx="16" cy="16" r="11"/><g id="gt"><rect x="12.500" y="0" width="7" height="8" rx="1"/><rect x="12.500" y="24" width="7" height="8" rx="1"/></g><use href="#gt" transform="rotate(45 16 16)"/><use href="#gt" transform="rotate(90 16 16)"/><use href="#gt" transform="rotate(135 16 16)"/></g><circle cx="16" cy="16" r="4.800" fill="#f2f2f2"/></svg>
<div class="t" style="left:182px;top:404.22px;font-size:21px;color:#2c2c2c;transform:scaleX(1.0133);transform-origin:0 0;">Document Settings</div>

<!-- row 3 named views -->
<div class="brow" style="left:116px;top:442px;width:220px"></div>
<svg class="tri" style="left:80px;top:449px" width="19" height="27" viewBox="0 0 19 27"><path d="M1.500 2 L17 13.500 L1.500 25Z" fill="#e6e6e6" stroke="#222" stroke-width="2"/></svg>
<svg style="left:122px;top:449px" width="32" height="28" viewBox="0 0 32 28"><path d="M0 1 H13 L15 4 H32 V6 H0Z" fill="#b4b4b4"/><rect x="0" y="4.500" width="32" height="23.500" fill="#9b9b9b"/></svg>
<div class="t" style="left:182px;top:452.22px;font-size:21px;color:#2c2c2c;transform:scaleX(1.0529);transform-origin:0 0;">Named Views</div>

<!-- row 4 origin -->
<div class="brow" style="left:116px;top:490px;width:190px"></div>
<svg class="tri" style="left:80px;top:497px" width="19" height="27" viewBox="0 0 19 27"><path d="M1.500 2 L17 13.500 L1.500 25Z" fill="#e6e6e6" stroke="#222" stroke-width="2"/></svg>
<svg style="left:122px;top:499px" width="32" height="22" viewBox="0 0 32 22"><path d="M1 11 Q16 -7 31 11 Q16 29 1 11Z" fill="none" stroke="#a8a8a8" stroke-width="1.800"/><circle cx="16" cy="11" r="5.500" fill="none" stroke="#a8a8a8" stroke-width="1.800"/><path d="M5 0 L27 22" stroke="#8e8e8e" stroke-width="1.600"/></svg>
<svg style="left:172px;top:497px" width="32" height="28" viewBox="0 0 32 28"><path d="M0 1 H13 L15 4 H32 V6 H0Z" fill="#b4b4b4"/><rect x="0" y="4.500" width="32" height="23.500" fill="#9b9b9b"/></svg>
<div class="t" style="left:232.5px;top:500.22px;font-size:21px;color:#2c2c2c;transform:scaleX(0.9727);transform-origin:0 0;">Origin</div>

<!-- row 5 bodies -->
<div class="brow" style="left:116px;top:538px;width:206px"></div>
<svg class="tri" style="left:80px;top:545px" width="19" height="27" viewBox="0 0 19 27"><path d="M1.500 2 L17 13.500 L1.500 25Z" fill="#e6e6e6" stroke="#222" stroke-width="2"/></svg>
<svg style="left:122px;top:547px" width="32" height="22" viewBox="0 0 32 22"><path d="M0.500 11 Q16 -9 31.500 11 Q16 31 0.500 11Z" fill="#a3a3a3"/><circle cx="16" cy="11" r="7" fill="#e4e4e4"/><circle cx="16" cy="11" r="3.800" fill="#a3a3a3"/></svg>
<svg style="left:172px;top:545px" width="32" height="28" viewBox="0 0 32 28"><path d="M0 1 H13 L15 4 H32 V6 H0Z" fill="#b4b4b4"/><rect x="0" y="4.500" width="32" height="23.500" fill="#9b9b9b"/></svg>
<div class="t" style="left:232.5px;top:548.22px;font-size:21px;color:#2c2c2c;transform:scaleX(1.0200);transform-origin:0 0;">Bodies</div>
<svg style="left:164px;top:566px" width="154" height="8" viewBox="0 0 154 8"><path d="M1 7 L8 1 M13 7 L20 1 M25 7 L32 1 M37 7 L44 1 M49 7 L56 1 M61 7 L68 1 M73 7 L80 1 M85 7 L92 1 M97 7 L104 1 M109 7 L116 1 M121 7 L128 1 M133 7 L140 1 M145 7 L152 1" stroke="#7b8fb5" stroke-width="2.600" fill="none"/></svg>

<!-- row 6 sketches -->
<div class="brow" style="left:116px;top:586px;width:230px"></div>
<svg class="tri" style="left:80px;top:593px" width="19" height="27" viewBox="0 0 19 27"><path d="M1.500 2 L17 13.500 L1.500 25Z" fill="#e6e6e6" stroke="#222" stroke-width="2"/></svg>
<svg style="left:122px;top:595px" width="32" height="22" viewBox="0 0 32 22"><path d="M0.500 11 Q16 -9 31.500 11 Q16 31 0.500 11Z" fill="#a3a3a3"/><circle cx="16" cy="11" r="7" fill="#e4e4e4"/><circle cx="16" cy="11" r="3.800" fill="#a3a3a3"/></svg>
<svg style="left:172px;top:593px" width="32" height="28" viewBox="0 0 32 28"><path d="M0 1 H13 L15 4 H32 V6 H0Z" fill="#b4b4b4"/><rect x="0" y="4.500" width="32" height="23.500" fill="#9b9b9b"/></svg>
<div class="t" style="left:232.5px;top:596.22px;font-size:21px;color:#2c2c2c;transform:scaleX(1.0244);transform-origin:0 0;">Sketches</div>

<!-- ===== COMMENTS PANEL ===== -->
<div class="abs" style="left:8px;top:1201.500px;width:600px;height:50px;background:#f2f2f2;border:1.500px solid #c2c2c2;border-top:none"></div>
<div class="t" style="left:58.75px;top:1215.13px;font-size:22px;color:#555555;transform:scaleX(0.8825);transform-origin:0 0;">COMMENTS</div>
<svg style="left:566px;top:1217px" width="18" height="18" viewBox="0 0 18 18"><circle cx="9" cy="9" r="9" fill="#1a1a1a"/><rect x="4" y="7.500" width="10" height="3" fill="#f2f2f2"/><rect x="7.500" y="4" width="3" height="10" fill="#f2f2f2"/></svg>
<div class="abs" style="left:598px;top:1216px;width:2px;height:21px;background:#8a8a8a"></div>
<div class="abs" style="left:602px;top:1216px;width:1px;height:21px;background:#b5b5b5"></div>

<!-- ===== VIEW CUBE ===== -->
<svg style="left:2410px;top:300px" width="120" height="120" viewBox="2410 300 120 120">
 <path d="M2425 335 L2479 322.500 V399 H2425Z" fill="#e6e6e6"/>
 <path d="M2479 322.500 L2515 338 V399 H2479Z" fill="#e2e2e3"/>
 <rect x="2468" y="340" width="18" height="42" fill="#dadbdd"/>
 <g stroke="#777" stroke-width="1.500" fill="none" stroke-dasharray="6 4"><path d="M2425 335 L2479 322.500 L2515 338 V399"/><path d="M2479 322.500 V399"/></g>
 <path d="M2424 324 V400" stroke="#8a8af0" stroke-width="3"/>
 <path d="M2424 399 H2515" stroke="#7a6a6a" stroke-width="2"/>
 <path d="M2424 399 H2492" stroke="#ee8a8a" stroke-width="3.500"/>
 <path d="M2424 403.500 L2472 404" stroke="#44ee44" stroke-width="2.500"/>
 <text x="2420" y="321" font-size="19" font-weight="bold" fill="#8a8af0" font-family="Liberation Sans,sans-serif">Z</text>
 <text x="2493" y="402" font-size="17" font-weight="bold" fill="#ee7070" font-family="Liberation Sans,sans-serif">X</text>
 <text x="2472" y="413" font-size="13" font-weight="bold" fill="#66ee66" font-family="Liberation Sans,sans-serif">Y</text>
 <text x="2432" y="372" font-size="16.500" fill="#858a92" font-family="Liberation Sans,sans-serif" transform="rotate(-8 2432 372)" textLength="38" lengthAdjust="spacingAndGlyphs">FRONT</text>
 <text x="2486" y="366" font-size="16.500" fill="#858a92" font-family="Liberation Sans,sans-serif" transform="rotate(12 2486 366)" textLength="25" lengthAdjust="spacingAndGlyphs">RIGHT</text>
</svg>

<!-- ===== annotations over house ===== -->
<div class="t" style="left:930px;top:668.75px;font-size:29px;color:#4a4a4a;transform:scaleX(0.6908);transform-origin:0 0;">1.00</div>
<svg style="left:870px;top:660px" width="90" height="90" viewBox="870 660 90 90">
 <defs><clipPath id="ac"><path d="M894.100 695 L920 679.100 L917.500 693.100 L933.750 695.600 L930.900 711.900 L913.750 710 L910 722.800Z"/></clipPath></defs>
 <path d="M894.100 695 L920 679.100 L917.500 693.100 L933.750 695.600 L930.900 711.900 L913.750 710 L910 722.800Z" fill="#0e96dc" stroke="#ffffff" stroke-width="5.600" clip-path="url(#ac)"/>
 <path d="M894.100 695 L920 679.100 L917.500 693.100 L933.750 695.600 L930.900 711.900 L913.750 710 L910 722.800Z" fill="none" stroke="#2c5f9c" stroke-width="1"/>
 <ellipse cx="913.900" cy="703" rx="33.700" ry="31.800" fill="none" stroke="#ed1c24" stroke-width="8.600"/>
</svg>

<!-- tooltip -->
<div class="abs" style="left:977px;top:736px;width:663px;height:36px;background:#f1f1f1;border:2px solid #767676"></div>
<div class="t" style="left:985px;top:743.18px;font-size:24px;color:#000000;transform:scaleX(0.9720);transform-origin:0 0;">Select sketch profiles, sketch curves or planar faces to extrude</div>

<!-- red box + input widget -->
<div class="abs" style="left:1176px;top:785px;width:214px;height:43px;background:#f1f1f1"></div>
<div class="abs" style="left:1196px;top:785px;width:3px;height:43px;background:#dcdcdc"></div>
<svg style="left:1186px;top:789px" width="6" height="36" viewBox="0 0 6 36"><path d="M1 0 L5 4 L1 8 L5 12 L1 16 L5 20 L1 24 L5 28 L1 32 L5 36" stroke="#dadada" stroke-width="1.200" fill="none"/></svg>
<div class="abs" style="left:1204px;top:785px;width:138px;height:39px;background:#fff;border:1.500px solid #bdbdbd;border-top:none"></div>
<div class="t" style="left:1256.6px;top:791.72px;font-size:21px;color:#5c6470;transform:scaleX(0.9657);transform-origin:0 0;">0.2</div>
<div class="abs" style="left:1286px;top:791px;width:2px;height:24px;background:#111"></div>
<div class="abs" style="left:1364px;top:791px;width:5px;height:5px;background:#777;border-radius:1px"></div>
<div class="abs" style="left:1364px;top:801px;width:5px;height:5px;background:#777;border-radius:1px"></div>
<div class="abs" style="left:1364px;top:811px;width:5px;height:5px;background:#777;border-radius:1px"></div>
<div class="abs" style="left:1168px;top:777px;width:230px;height:59px;border:8px solid #ed1c24"></div>
<svg style="left:1410px;top:760px" width="135" height="90" viewBox="1410 760 135 90"><path d="M1417.200 805.300 L1476 768.500 Q1479.300 767 1479.300 771 V784.200 H1532.500 Q1535.500 784.200 1535.500 787.200 V822.500 Q1535.500 825.500 1532.500 825.500 H1479.300 V839.500 Q1479.300 843.500 1476 842 Z" fill="#ed1c24"/></svg>

<!-- ===== NAV TOOLBAR ===== -->
<div class="abs" style="left:1042px;top:1204px;width:474px;height:48px;background:#f1f1f1"></div>
<!-- orbit -->
<svg style="left:1047px;top:1211px" width="34" height="34" viewBox="0 0 34 34">
 <ellipse cx="16" cy="20" rx="14.500" ry="5.500" fill="none" stroke="#333" stroke-width="2"/>
 <rect x="14.500" y="6" width="5" height="26" fill="#fff" stroke="#333" stroke-width="1.400"/>
 <path d="M12 8 L17 1 L22 8Z" fill="#fff" stroke="#333" stroke-width="1.400"/>
 <path d="M3 25 L10 20.500 V29.500Z" fill="#222"/><path d="M8 25 H16" stroke="#222" stroke-width="2"/>
</svg>
<div class="dd" style="left:1090px;top:1224px"></div>
<!-- look at -->
<svg style="left:1114px;top:1212px" width="33" height="32" viewBox="0 0 33 32">
 <path d="M2 11 L11 2 V6 L24 1 V11Z" fill="#8b8f98" stroke="#3a3f4a" stroke-width="1.600"/>
 <rect x="1" y="11" width="31" height="20" fill="#f4f4f4" stroke="#3a3f4a" stroke-width="2"/>
 <rect x="7" y="17" width="19" height="9" fill="#9a9fab" stroke="#3a3f4a" stroke-width="1.600"/>
</svg>
<!-- pan -->
<svg style="left:1166px;top:1211px" width="33" height="34" viewBox="0 0 33 34">
 <path d="M8 20 L3 15 Q1 13 3 12 Q5 11 7 13 L10 16 V6 Q10 3 12 3 Q14 3 14 6 V4 Q14 1 16.500 1 Q19 1 19 4 V5 Q19 3 21 3 Q23.500 3 23.500 6 V9 Q23.500 7 25.500 7 Q28 7 28 10 V20 Q28 26 25 29 V33 H12 V29 Q9 25 8 20Z" fill="#f8f8f8" stroke="#3b4a66" stroke-width="1.700"/>
 <path d="M14 6 V15 M19 5 V15 M23.500 9 V16" stroke="#3b4a66" stroke-width="1.500" fill="none"/>
</svg>
<!-- zoom -->
<svg style="left:1217px;top:1211px" width="35" height="34" viewBox="0 0 35 34">
 <circle cx="11.500" cy="16.500" r="9.500" fill="#d8eaf0" stroke="#4a5568" stroke-width="2"/>
 <path d="M18 23 L27 32" stroke="#333" stroke-width="4.500" stroke-linecap="round"/>
 <path d="M24 5 H34 M29 0.500 V10 M24 13.500 H34" stroke="#222" stroke-width="1.800"/>
</svg>
<!-- zoom window -->
<svg style="left:1269px;top:1211px" width="34" height="34" viewBox="0 0 34 34">
 <rect x="1.500" y="1.500" width="29" height="30" fill="none" stroke="#333" stroke-width="1.600" stroke-dasharray="4 3"/>
 <circle cx="14" cy="14" r="12" fill="#d8eaf0" stroke="#4a5568" stroke-width="2"/>
 <path d="M22.500 22.500 L31 31" stroke="#333" stroke-width="5" stroke-linecap="round"/>
</svg>
<div class="dd" style="left:1312px;top:1224px"></div>
<!-- display -->
<svg style="left:1335px;top:1211px" width="34" height="34" viewBox="0 0 34 34">
 <rect x="1" y="1" width="32" height="24" fill="#e8e8e8" stroke="#555" stroke-width="1.600"/>
 <rect x="4.500" y="4.500" width="25" height="17" fill="#a9c4e8" stroke="#1f3a6e" stroke-width="2"/>
 <path d="M13 25 H21 V29 H25 V32 H9 V29 H13Z" fill="#e0e0e0" stroke="#666" stroke-width="1.200"/>
</svg>
<div class="dd" style="left:1372px;top:1224px"></div>
<!-- grid -->
<svg style="left:1398px;top:1212px" width="32" height="32" viewBox="0 0 32 32">
 <defs><linearGradient id="gg" x1="0" y1="0" x2="0" y2="1"><stop offset="0" stop-color="#fafafa"/><stop offset="1" stop-color="#7d8494"/></linearGradient></defs>
 <rect x="1" y="1" width="30" height="30" fill="url(#gg)" stroke="#555" stroke-width="1.600"/>
 <path d="M7 1 V31 M13 1 V31 M19 1 V31 M25 1 V31 M1 7 H31 M1 13 H31 M1 19 H31 M1 25 H31" stroke="#555" stroke-width="1.300"/>
</svg>
<div class="dd" style="left:1434px;top:1224px"></div>
<!-- viewports -->
<svg style="left:1460px;top:1213px" width="31" height="30" viewBox="0 0 31 30">
 <g fill="#a9c4e8" stroke="#1f3a6e" stroke-width="1.500"><rect x="0.800" y="0.800" width="13.400" height="12.900"/><rect x="16.300" y="0.800" width="13.400" height="12.900"/><rect x="0.800" y="16" width="13.400" height="12.900"/><rect x="16.300" y="16" width="13.400" height="12.900"/></g>
 <g fill="#7fa6d6"><rect x="4.500" y="4.800" width="6" height="5"/><rect x="20" y="4.800" width="6" height="5"/><rect x="4.500" y="20" width="6" height="5"/><rect x="20" y="20" width="6" height="5"/></g>
</svg>
<div class="dd" style="left:1496px;top:1224px"></div>


<!-- ===== EXTRUDE PANEL ===== -->
<div class="abs" style="left:2052px;top:453px;width:500px;height:625px;background:#f2f2f2;border:2px solid #c6c6c6"></div>
<div class="abs" style="left:2053px;top:500px;width:498px;height:1.500px;background:#c8c8c8"></div>
<div class="abs" style="left:2057px;top:468px;width:1.500px;height:18px;background:#555"></div>
<div class="abs" style="left:2060px;top:468px;width:1px;height:18px;background:#aaa"></div>
<svg style="left:2076px;top:468px" width="18" height="18" viewBox="0 0 18 18"><circle cx="9" cy="9" r="9" fill="#1a1a1a"/><rect x="4" y="7.500" width="10" height="3" fill="#f2f2f2"/></svg>
<div class="t" style="left:2102.4px;top:465.92px;font-size:21px;color:#666666;transform:scaleX(0.9008);transform-origin:0 0;">EXTRUDE</div>
<svg style="left:2523px;top:472px" width="18" height="10" viewBox="0 0 20 13" preserveAspectRatio="none"><path d="M0 0 L9 6.500 L0 13Z M10 0 L19 6.500 L10 13Z" fill="#222"/></svg>

<!-- Type -->
<div class="t" style="left:2078px;top:522.72px;font-size:21px;color:#2c2c2c;transform:scaleX(1.0103);transform-origin:0 0;">Type</div>
<div class="abs" style="left:2223.500px;top:505px;width:45.500px;height:54px;background:#0696d7;border-radius:2px"></div>
<svg style="left:2226px;top:510px" width="42" height="44" viewBox="0 0 42 44">
 <path d="M4 9 L9 4 H28 L22 9Z" fill="#b9e0fd"/><path d="M4 9 H22 V35 H4Z" fill="#8ccafa"/><path d="M22 9 L28 4 V29 L22 35Z" fill="#6aade4"/>
 <path d="M4 35 H22 V40 H4Z" fill="#e4e4e4"/><path d="M22 35 L28 29 V34 L22 40Z" fill="#c4c4c4"/>
 <path d="M33.500 34 V10" stroke="#fff" stroke-width="2"/><path d="M30.500 12 L33.500 5 L36.500 12Z" fill="#fff"/>
</svg>
<svg style="left:2286px;top:510px" width="40" height="44" viewBox="0 0 40 44">
 <path d="M2 9 L7 4 H26 L21 9Z" fill="#8ccafa"/><path d="M2 9 H8 V35 H2Z" fill="#6aade4"/><path d="M8 9 H14 V33 H8Z" fill="#4f9bd6"/><path d="M14 9 H21 V35 H14Z" fill="#6aade4"/><path d="M21 9 L26 4 V29 L21 35Z" fill="#4292cc"/>
 <path d="M2 35 H8 L10 32 H14 V40 H12 L10 37 H8 V40 H2Z" fill="#d8d8d8"/><path d="M14 35 H21 V40 H14Z" fill="#d8d8d8"/><path d="M21 35 L26 29 V34 L21 40Z" fill="#bdbdbd"/>
 <path d="M31 34 V10" stroke="#222" stroke-width="2"/><path d="M28.500 12 L31 5 L33.500 12Z" fill="#222"/>
</svg>

<!-- Profiles -->
<div class="t" style="left:2078px;top:581.72px;font-size:21px;color:#2c2c2c;transform:scaleX(1.0167);transform-origin:0 0;">Profiles</div>
<div class="abs" style="left:2223.500px;top:565px;width:155px;height:54px;background:#0696d7;border-radius:2px"></div>
<svg style="left:2237px;top:577px" width="22" height="32" viewBox="0 0 22 32"><path d="M1.500 1.500 V24 L7 19.500 L11 29 L15 27.500 L11 18 L18.500 17.500Z" fill="#e8e8e8" stroke="#555" stroke-width="1.800" stroke-linejoin="round"/></svg>
<div class="t" style="left:2267.8px;top:581.20px;font-size:21.5px;color:#ffffff;transform:scaleX(1.0049);transform-origin:0 0;">1 selected</div>
<svg style="left:2401px;top:584px" width="17" height="17" viewBox="0 0 17 17"><path d="M1.500 1.500 L15.500 15.500 M15.500 1.500 L1.500 15.500" stroke="#555" stroke-width="3.600"/></svg>

<!-- Start -->
<div class="t" style="left:2078px;top:641.72px;font-size:21px;color:#2c2c2c;transform:scaleX(1.0370);transform-origin:0 0;">Start</div>
<div class="pdd" style="top:625px"></div>
<svg style="left:2234px;top:634px" width="26" height="34" viewBox="0 0 26 34"><rect x="2" y="2" width="4" height="30" fill="#0f2a56"/><path d="M6 17 H19" stroke="#111" stroke-width="2"/><path d="M16 12.500 L22.500 17 L16 21.500Z" fill="#111"/></svg>
<div class="t" style="left:2270.5px;top:641.42px;font-size:21px;color:#2c2c2c;transform:scaleX(0.9825);transform-origin:0 0;">Profile Plane</div>
<div class="dd" style="left:2464px;top:649px"></div>

<!-- Direction -->
<div class="t" style="left:2078px;top:701.72px;font-size:21px;color:#2c2c2c;transform:scaleX(1.0087);transform-origin:0 0;">Direction</div>
<div class="pdd" style="top:685px"></div>
<svg style="left:2228px;top:693px" width="36" height="36" viewBox="0 0 36 36"><path d="M12 2 L32 8 V24 L12 18Z" fill="#f4b183" stroke="#e8a070" stroke-width="1"/><path d="M22 13 L4 31" stroke="#666" stroke-width="2.200"/><path d="M2 33 L5 24 L11 30Z" fill="#666"/></svg>
<div class="t" style="left:2270.5px;top:701.42px;font-size:21px;color:#2c2c2c;transform:scaleX(0.9970);transform-origin:0 0;">One Side</div>
<div class="dd" style="left:2464px;top:709px"></div>

<!-- Extent Type -->
<div class="t" style="left:2078px;top:761.72px;font-size:21px;color:#2c2c2c;transform:scaleX(1.0097);transform-origin:0 0;">Extent Type</div>
<div class="pdd" style="top:745px"></div>
<svg style="left:2228px;top:754px" width="36" height="34" viewBox="0 0 36 34"><rect x="2" y="2" width="4" height="30" fill="#0f2a56"/><rect x="30" y="2" width="4" height="30" fill="#0f2a56"/><path d="M10 17 H26" stroke="#111" stroke-width="2"/><path d="M7 17 L13 13 V21Z M29 17 L23 13 V21Z" fill="#111"/></svg>
<div class="t" style="left:2270.5px;top:761.42px;font-size:21px;color:#2c2c2c;transform:scaleX(1.0171);transform-origin:0 0;">Distance</div>
<div class="dd" style="left:2464px;top:769px"></div>

<!-- Distance -->
<div class="t" style="left:2078px;top:821.82px;font-size:21px;color:#2c2c2c;transform:scaleX(1.0269);transform-origin:0 0;">Distance</div>
<div class="pin" style="top:806px"></div>
<div class="t" style="left:2230.6px;top:819.80px;font-size:21.5px;color:#444444;transform:scaleX(0.9444);transform-origin:0 0;">0.2 mm</div>

<!-- Taper -->
<div class="t" style="left:2078px;top:881.62px;font-size:21px;color:#2c2c2c;transform:scaleX(1.0250);transform-origin:0 0;">Taper Angle</div>
<div class="pin" style="top:866px"></div>
<div class="t" style="left:2230.6px;top:879.80px;font-size:21.5px;color:#444444;transform:scaleX(0.9953);transform-origin:0 0;">0.0 deg</div>

<div class="abs" style="left:2056px;top:932px;width:468px;height:1.500px;background:#bfbfbf"></div>

<!-- Operation -->
<div class="t" style="left:2078px;top:961.42px;font-size:21px;color:#2c2c2c;transform:scaleX(1.0116);transform-origin:0 0;">Operation</div>
<div class="pdd" style="top:945px"></div>
<svg style="left:2231px;top:957px" width="30" height="30" viewBox="0 0 30 30"><rect x="1" y="13" width="27" height="16" fill="#62a9e4" stroke="#4292cc" stroke-width="1.600"/><rect x="8" y="1.500" width="14" height="18" fill="#62a9e4" stroke="#4f9bd6" stroke-width="1.600"/></svg>
<div class="t" style="left:2270.2px;top:961.42px;font-size:21px;color:#2c2c2c;transform:scaleX(0.9629);transform-origin:0 0;">Join</div>
<div class="dd" style="left:2464px;top:969px"></div>

<div class="abs" style="left:2053px;top:1004px;width:498px;height:1.500px;background:#bcbcbc"></div>
<svg style="left:2070px;top:1030px" width="24" height="24" viewBox="0 0 24 24"><circle cx="12" cy="12" r="12" fill="#0a0a0a"/><rect x="10" y="10" width="4.500" height="9" fill="#fff"/><rect x="8.500" y="10" width="4" height="2" fill="#fff"/><rect x="8.500" y="17.500" width="7.500" height="2" fill="#fff"/><circle cx="12" cy="6.200" r="2.300" fill="#fff"/></svg>
<div class="abs" style="left:2268px;top:1022px;width:120px;height:38px;background:#e6e6e6;border:1.500px solid #adadad"></div>
<div class="t" style="left:2310.4px;top:1029.68px;font-size:23.3px;color:#707070;transform:scaleX(0.9919);transform-origin:0 0;">OK</div>
<div class="abs" style="left:2408px;top:1022px;width:120px;height:38px;background:#e6e6e6;border:1.500px solid #adadad"></div>
<div class="t" style="left:2428.5px;top:1029.68px;font-size:23.3px;color:#707070;transform:scaleX(1.0547);transform-origin:0 0;">Cancel</div>



<!-- ================= TIMELINE ================= -->
<div id="timeline" class="abs"></div>
<!-- playback -->
<svg style="left:20px;top:1292px" width="230" height="36" viewBox="20 1292 230 36" fill="#4a4a4c">
 <rect x="22" y="1296" width="4.200" height="28.500"/><path d="M46 1296 V1324.500 L26.500 1310.200Z"/>
 <path d="M89 1297 V1323.500 L70.500 1310.200Z"/><rect x="92" y="1304" width="4.300" height="12.500"/>
 <path d="M121.700 1294 V1326 L145.500 1310Z"/>
 <rect x="169.500" y="1304" width="4.500" height="12.500"/><path d="M177 1297 V1323.500 L195.500 1310.200Z"/>
 <path d="M222 1296 V1324.500 L241.800 1310.200Z"/><rect x="241.800" y="1296" width="4.200" height="28.500"/>
</svg>
<!-- bracket -->
<svg style="left:300px;top:1326px" width="360" height="20" viewBox="300 1326 360 20"><path d="M310 1330.400 V1341.800 H644 V1330.400 M356 1330.400 V1341.800 M404.200 1330.400 V1341.800 M452 1330.400 V1341.800 M500 1330.400 V1341.800 M548 1330.400 V1341.800 M596 1330.400 V1341.800" stroke="#c9c9c9" stroke-width="3.500" fill="none"/></svg>
<!-- feature icons -->
<svg style="left:0;top:1262px" width="700" height="98" viewBox="0 1262 700 98">
 <defs>
  <g id="tsk">
   <path d="M3 2.500 H29 M2.500 3 V29 M29.500 3 V18 M3 28.500 H18" stroke="#444" stroke-width="1.600" fill="none"/>
   <rect x="0" y="0" width="4.500" height="4.500" fill="#1b8fe0"/><rect x="26.500" y="0" width="4.500" height="4.500" fill="#1b8fe0"/><rect x="0" y="26.500" width="4.500" height="4.500" fill="#1b8fe0"/>
   <path d="M19.500 27 L27.500 18 L31 21.500 L22.500 30.500Z" fill="#f6b73c"/><path d="M27.500 18 L29.500 15.800 Q31.500 14.500 33 16.500 Q34 18.500 32.500 20 L31 21.500Z" fill="#f03a3a"/><path d="M19.500 27 L22.500 30.500 L17.500 32Z" fill="#8a8a8a"/>
  </g>
  <g id="tex">
   <path d="M1 8 L8 1 H25 L19 8Z" fill="#8ccafa"/><path d="M1 8 H19 V27 H1Z" fill="#6aade4"/><path d="M19 8 L25 1 V21 L19 27Z" fill="#4292cc"/>
   <path d="M1 28 H19 V32 H1Z" fill="#b9b9b9"/><path d="M19 28 L25 22 V26 L19 32Z" fill="#d0d0d0"/>
   <path d="M29.800 26 V3" stroke="#222" stroke-width="2"/><path d="M27 6 L29.800 1.500 L32.600 6Z" fill="#222"/>
  </g>
 </defs>
 <use href="#tsk" x="292" y="1292"/><use href="#tex" x="339" y="1292"/>
 <use href="#tsk" x="388" y="1292"/><use href="#tex" x="435" y="1292"/>
 <use href="#tsk" x="484" y="1292"/><use href="#tex" x="531" y="1292"/>
 <use href="#tsk" x="580" y="1292"/><use href="#tex" x="627" y="1292"/>
 <path d="M629 1283.500 L636.500 1274.800 M639 1283.500 L646.500 1274.800 M649 1283.500 L656.500 1274.800" stroke="#555" stroke-width="3.600" fill="none"/>
 <path d="M655.700 1279.800 H680.300 V1286 L670.200 1297 V1343.800 H665.600 V1297 L655.700 1286Z" fill="#666"/>
</svg>
<!-- settings gear -->
<svg style="left:2501px;top:1293px" width="33" height="33" viewBox="0 0 32 32"><g fill="#9e9e9e"><circle cx="16" cy="16" r="11"/><g id="gt2"><rect x="12.500" y="0" width="7" height="8" rx="1"/><rect x="12.500" y="24" width="7" height="8" rx="1"/></g><use href="#gt2" transform="rotate(45 16 16)"/><use href="#gt2" transform="rotate(90 16 16)"/><use href="#gt2" transform="rotate(135 16 16)"/></g><circle cx="16" cy="16" r="4.800" fill="#f1f1f1"/></svg>


<!-- ================= TASKBAR ================= -->
<div id="taskbar" class="abs"></div>
<!-- highlights -->
<div class="abs" style="left:392px;top:1360px;width:96px;height:80px;background:#b46b34"></div>
<div class="abs" style="left:479px;top:1360px;width:9px;height:80px;background:#aa622c"></div>
<div class="abs" style="left:392px;top:1436px;width:96px;height:4px;background:#ff7300"></div>
<div class="abs" style="left:882px;top:1360px;width:88px;height:80px;background:linear-gradient(90deg,#5a5a5a,#6e6e6e)"></div>
<div class="abs" style="left:970px;top:1360px;width:2px;height:80px;background:#343434"></div>
<div class="abs" style="left:972px;top:1360px;width:6px;height:80px;background:#565656"></div>
<!-- underlines -->
<div class="abs" style="left:302px;top:1436px;width:80px;height:4px;background:#76b9ed"></div>
<div class="abs" style="left:498px;top:1436px;width:80px;height:4px;background:#76b9ed"></div>
<div class="abs" style="left:596px;top:1436px;width:80px;height:4px;background:#76b9ed"></div>
<div class="abs" style="left:694px;top:1436px;width:63px;height:4px;background:#76b9ed"></div><div class="abs" style="left:758px;top:1436px;width:16px;height:4px;background:#5f9dd2"></div>
<div class="abs" style="left:792px;top:1436px;width:62px;height:4px;background:#76b9ed"></div><div class="abs" style="left:855px;top:1436px;width:17px;height:4px;background:#5f9dd2"></div>
<div class="abs" style="left:882px;top:1436px;width:88px;height:4px;background:#76b9ed"></div><div class="abs" style="left:972px;top:1436px;width:6px;height:4px;background:#5f9dd2"></div>
<div class="abs" style="left:988px;top:1436px;width:80px;height:4px;background:#76b9ed"></div>
<div class="abs" style="left:1086px;top:1436px;width:80px;height:4px;background:#76b9ed"></div>
<!-- windows logo -->
<svg style="left:31px;top:1383px" width="34" height="34" viewBox="0 0 34 34" fill="#fff"><path d="M0.500 5 L14.500 3 V16 H0.500Z M16.500 2.700 L33.500 0.300 V16 H16.500Z M0.500 18 H14.500 V31 L0.500 29Z M16.500 18 H33.500 V33.700 L16.500 31.300Z"/></svg>
<!-- search -->
<svg style="left:126px;top:1381px" width="38" height="38" viewBox="126 1381 38 38"><circle cx="148.800" cy="1394.800" r="11.200" fill="none" stroke="#fff" stroke-width="2.600"/><path d="M140.800 1403 L128.400 1415.800" stroke="#fff" stroke-width="2.800"/></svg>
<!-- task view -->
<svg style="left:222px;top:1384px" width="36" height="32" viewBox="0 0 36 32" fill="none" stroke="#fff" stroke-width="2.400"><rect x="2.200" y="8.500" width="21" height="15"/><path d="M1 2.200 H24.500 M1 29.800 H24.500 M2.200 1 V4 M23.200 1 V4 M2.200 28 V31 M23.200 28 V31 M30.500 1 V6 M30.500 17 V31"/><circle cx="30.500" cy="11.500" r="2.600" fill="#fff" stroke="none"/></svg>
<!-- spotify -->
<svg style="left:319px;top:1377px" width="46" height="46" viewBox="0 0 46 46"><circle cx="23" cy="23" r="22.600" fill="#1ed760"/><g fill="none" stroke="#191414" stroke-linecap="round"><path d="M10 16.500 Q23 12 37 18.500" stroke-width="4.200"/><path d="M11.500 24 Q23 20.500 34.500 26" stroke-width="3.500"/><path d="M13 31 Q23 28 32 32.500" stroke-width="3"/></g></svg>
<!-- LINE -->
<svg style="left:416px;top:1376px" width="48" height="48" viewBox="0 0 48 48"><rect x="0" y="0" width="48" height="48" rx="8" fill="#07b90a"/><path d="M24 8 Q42 8 42 22 Q42 32 26 40 Q23 41.500 23.500 38.500 L24 35.500 Q6 34 6 22 Q6 8 24 8Z" fill="#fff"/><text x="24" y="27.500" font-size="11.500" font-weight="bold" fill="#07b90a" text-anchor="middle" font-family="Liberation Sans,sans-serif" letter-spacing="0.300">LINE</text></svg>
<!-- chrome -->
<svg style="left:513px;top:1375px" width="54" height="54" viewBox="0 0 54 54">
 <circle cx="25" cy="24.500" r="24" fill="#e33b2e"/>
 <path d="M25 24.500 L4.200 12.500 A24 24 0 0 0 25 48.500 L37 31Z" fill="#2da94f"/>
 <path d="M25 24.500 L37 31 L25 48.500 A24 24 0 0 0 45.800 12.500 H25Z" fill="#fcc934"/>
 <path d="M25 24.500 L4.200 12.500 A24 24 0 0 1 45.800 12.500 H25Z" fill="#e33b2e"/>
 <circle cx="25" cy="24.500" r="11" fill="#fff"/><circle cx="25" cy="24.500" r="8.800" fill="#1a73e8"/>
 <circle cx="39" cy="38" r="14" fill="#8b8794"/><circle cx="39" cy="38" r="13" fill="#a09aa6"/><circle cx="37" cy="33" r="4.500" fill="#e5c7b5"/><path d="M29 46 Q37 34 47 46Z" fill="#eadfd8"/><circle cx="45" cy="35" r="3" fill="#d9a05a"/><circle cx="32" cy="38" r="3" fill="#c9b0a0"/>
</svg>
<!-- settings -->
<svg style="left:617px;top:1381px" width="37" height="37" viewBox="0 0 36 36"><g fill="#fff"><circle cx="18" cy="18" r="13"/><g id="gt3"><rect x="14.600" y="0" width="6.800" height="8" rx="0.800"/><rect x="14.600" y="28" width="6.800" height="8" rx="0.800"/></g><use href="#gt3" transform="rotate(45 18 18)"/><use href="#gt3" transform="rotate(90 18 18)"/><use href="#gt3" transform="rotate(135 18 18)"/></g><circle cx="18" cy="18" r="7.400" fill="#424242"/></svg>
<!-- paint -->
<svg style="left:708px;top:1374px" width="52" height="50" viewBox="0 0 52 50">
 <path d="M4 30 Q2 14 20 10 Q40 6 44 22 Q46 36 30 42 Q24 44 22 40 Q20 36 14 40 Q6 42 4 30Z" fill="#bfe0f4" stroke="#8fb8d4" stroke-width="1.500"/>
 <circle cx="10" cy="27" r="3.600" fill="#e23b32"/><circle cx="17" cy="19" r="3.600" fill="#4cb848"/><circle cx="27" cy="15" r="3.800" fill="#f5c518"/><circle cx="19" cy="30" r="2.600" fill="#333"/>
 <path d="M22 48 L38 14 L41 15.500 L25 49Z" fill="#e8872a" stroke="#b05e14" stroke-width="0.800"/>
 <path d="M38 14 L39.500 8 L42.500 9.500 L41 15.500Z" fill="#b8b8b8"/><path d="M39.500 8 Q38 3 43 0 L49 3.500 Q47 8 42.500 9.500Z" fill="#f1d3a6"/>
</svg>
<!-- fusion x2 -->
<svg style="left:809px;top:1375px" width="46" height="50" viewBox="0 0 46 50">
 <path d="M1 8 L9 1 V32 L1 37Z" fill="#ff9a4a"/><path d="M9 1 H38 Q41 1 41 4 V34 H9Z" fill="#ff6f00"/><path d="M41 6 L45 9 V47 Q45 49 43 49 H6 L5 38 L9 34 H41Z" fill="#c85400"/><path d="M5 38 H40 V49 H7 Q5 49 5 47Z" fill="#a64200"/>
 <text x="25" y="28" font-size="26" font-weight="bold" fill="#fff" text-anchor="middle" font-family="Liberation Sans,sans-serif">F</text>
 <text x="24" y="47" font-size="9.500" font-weight="bold" fill="#f3dccb" text-anchor="middle" font-family="Liberation Sans,sans-serif">360</text>
</svg>
<svg style="left:907px;top:1375px" width="46" height="50" viewBox="0 0 46 50">
 <path d="M1 8 L9 1 V32 L1 37Z" fill="#ff9a4a"/><path d="M9 1 H38 Q41 1 41 4 V34 H9Z" fill="#ff6f00"/><path d="M41 6 L45 9 V47 Q45 49 43 49 H6 L5 38 L9 34 H41Z" fill="#c85400"/><path d="M5 38 H40 V49 H7 Q5 49 5 47Z" fill="#a64200"/>
 <text x="25" y="28" font-size="26" font-weight="bold" fill="#fff" text-anchor="middle" font-family="Liberation Sans,sans-serif">F</text>
 <text x="24" y="47" font-size="9.500" font-weight="bold" fill="#fff" text-anchor="middle" font-family="Liberation Sans,sans-serif">360</text>
</svg>
<!-- nordvpn -->
<svg style="left:1007px;top:1378px" width="43" height="43" viewBox="0 0 43 43"><defs><linearGradient id="nv" x1="0" y1="0" x2="0" y2="1"><stop offset="0" stop-color="#3aa0e8"/><stop offset="0.500" stop-color="#2460b8"/><stop offset="1" stop-color="#1c4a9c"/></linearGradient></defs><circle cx="21.500" cy="21.500" r="21.200" fill="url(#nv)"/><path d="M7 29 Q4 12 21.500 9 Q39 12 36 29 L28 17 L25 21 L21.500 15 L18 21 L15 17Z" fill="#eef4fb"/></svg>
<!-- snipping -->
<svg style="left:1102px;top:1375px" width="50" height="50" viewBox="0 0 50 50">
 <ellipse cx="20" cy="28" rx="17" ry="9" fill="#9c9c9c" stroke="#d94a4a" stroke-width="1"/>
 <ellipse cx="22" cy="17" rx="19" ry="12" fill="#f6f6f6" stroke="#e23b3b" stroke-width="2" transform="rotate(-12 22 17)"/>
 <path d="M12 16 H34 M14 21 H30" stroke="#c8c8c8" stroke-width="1.400"/>
 <path d="M26 6 L31 32 M10 20 L30 30" stroke="#8a8a8a" stroke-width="2.600"/>
 <ellipse cx="40" cy="32" rx="8" ry="4.500" fill="none" stroke="#1b8fe0" stroke-width="3" transform="rotate(-25 40 32)"/>
 <ellipse cx="31" cy="42" rx="4.500" ry="8" fill="none" stroke="#1b8fe0" stroke-width="3" transform="rotate(-10 31 42)"/>
</svg>
<!-- weather -->
<svg style="left:1857px;top:1383px" width="52" height="33" viewBox="0 0 52 33"><defs><linearGradient id="cl" x1="0" y1="0" x2="0" y2="1"><stop offset="0" stop-color="#ffffff"/><stop offset="0.550" stop-color="#d5e2fa"/><stop offset="1" stop-color="#86a8ec"/></linearGradient></defs><path d="M10 32 Q1 32 1 23.500 Q1 16 9 15 Q10 5 20 2 Q31 0 35 10 Q38 8 42 10 Q46 12 45 17 Q51 18 51 25 Q51 32 43 32Z" fill="url(#cl)"/></svg>
<div class="t" style="left:1924.4px;top:1388.08px;font-size:26.6px;color:#ffffff;transform:scaleX(0.9350);transform-origin:0 0;">54°F</div>
<div class="t" style="left:1994px;top:1388.08px;font-size:26.6px;color:#ffffff;transform:scaleX(1.0341);transform-origin:0 0;">Cloudy</div>
<svg style="left:2136px;top:1391px" width="30" height="18" viewBox="0 0 30 18"><path d="M2.500 15.500 L15 3 L27.500 15.500" stroke="#fff" stroke-width="2.200" fill="none"/></svg>
<svg style="left:2203px;top:1384px" width="26" height="32" viewBox="0 0 26 32" fill="none" stroke="#fff" stroke-width="2"><rect x="2" y="9" width="14" height="14" rx="3"/><path d="M16 14 L23 10.500 V21.500 L16 18Z"/><path d="M4 5 Q12 -1 20 5 M4 27 Q12 33 20 27"/></svg>
<div class="t" style="left:2261px;top:1390.11px;font-size:23.5px;color:#ffffff;transform:scaleX(0.8717);transform-origin:0 0;">ENG</div>
<div class="t" style="left:2343.4px;top:1370.94px;font-size:23.7px;color:#ffffff;transform:scaleX(0.9556);transform-origin:0 0;">9:14 PM</div>
<div class="t" style="left:2337.7px;top:1407.44px;font-size:23.7px;color:#ffffff;transform:scaleX(1.0312);transform-origin:0 0;">4/8/2023</div>
<svg style="left:2477px;top:1384px" width="34" height="32" viewBox="0 0 34 32"><path d="M1.500 1.500 H32.500 V23.500 H21 L16 28.500 L11 23.500 H1.500Z" fill="none" stroke="#fff" stroke-width="2.200"/></svg>
<div class="abs" style="left:2551px;top:1360px;width:1px;height:80px;background:#8c8c8c"></div>

</body>
</html>
